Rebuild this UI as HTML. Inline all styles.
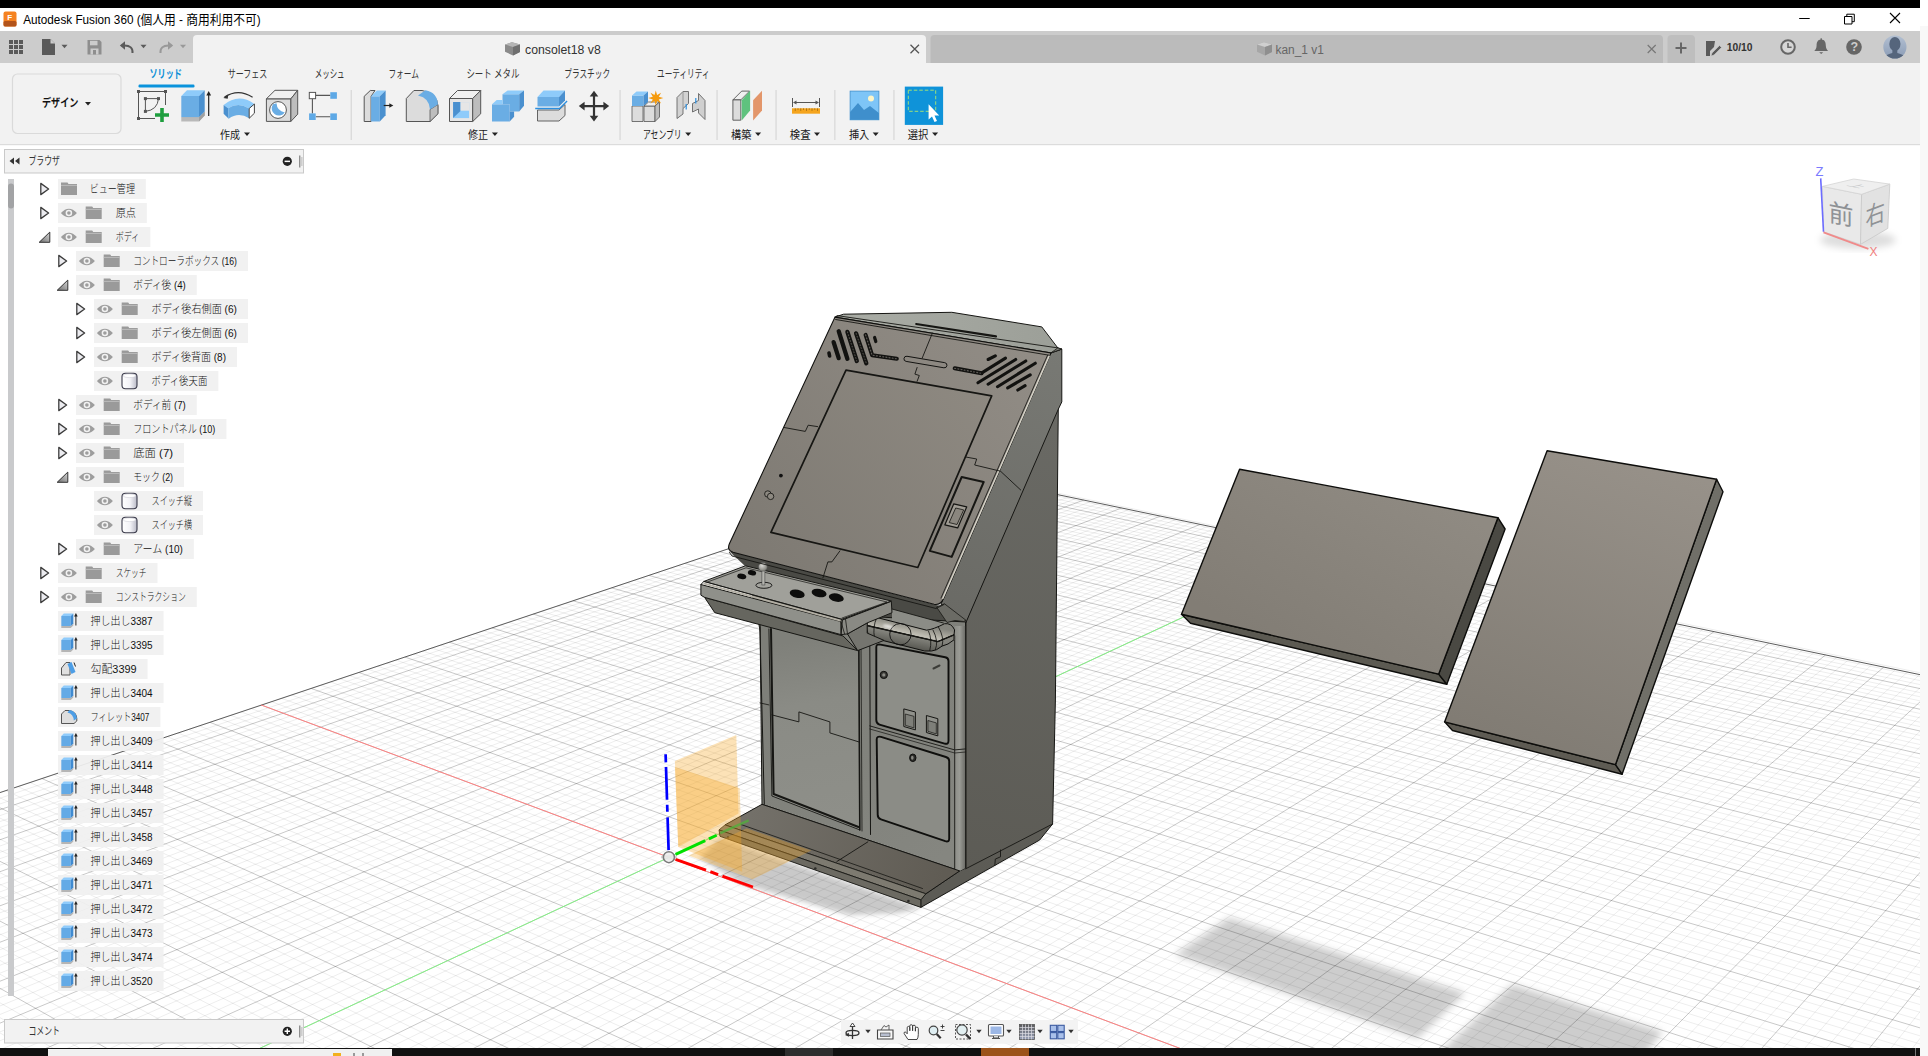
<!DOCTYPE html>
<html lang="ja"><head><meta charset="utf-8"><title>Autodesk Fusion 360</title>
<style>
html,body{margin:0;padding:0;background:#fff;overflow:hidden}
body{width:1928px;height:1056px;position:relative;font-family:"Liberation Sans","Noto Sans CJK JP",sans-serif}
svg{display:block}
</style></head><body>
<svg width="1920" height="903" viewBox="0 145 1920 903" style="position:absolute;left:0;top:145px">
<defs>
<filter id="b4" x="-20%" y="-20%" width="140%" height="140%"><feGaussianBlur stdDeviation="3.6"/></filter>
<filter id="b1" x="-50%" y="-50%" width="200%" height="200%"><feGaussianBlur stdDeviation="0.9"/></filter>
<filter id="b2" x="-20%" y="-20%" width="140%" height="140%"><feGaussianBlur stdDeviation="2.5"/></filter>
<linearGradient id="gBezel" gradientUnits="userSpaceOnUse" x1="1040" y1="340" x2="740" y2="600"><stop offset="0" stop-color="#928d86"/><stop offset="1" stop-color="#7c7871"/></linearGradient>
<linearGradient id="gScreen" gradientUnits="userSpaceOnUse" x1="990" y1="390" x2="780" y2="560"><stop offset="0" stop-color="#8e8981"/><stop offset="1" stop-color="#7f7b74"/></linearGradient>
<linearGradient id="gTop" gradientUnits="userSpaceOnUse" x1="840" y1="315" x2="1060" y2="345"><stop offset="0" stop-color="#a9aca5"/><stop offset="1" stop-color="#9c9f98"/></linearGradient>
<linearGradient id="gSide" gradientUnits="userSpaceOnUse" x1="1060" y1="400" x2="980" y2="880"><stop offset="0" stop-color="#6a6a65"/><stop offset="1" stop-color="#5c5b55"/></linearGradient>
<linearGradient id="gHouse" gradientUnits="userSpaceOnUse" x1="1060" y1="350" x2="960" y2="620"><stop offset="0" stop-color="#787974"/><stop offset="1" stop-color="#6a6a65"/></linearGradient>
<linearGradient id="gFront" gradientUnits="userSpaceOnUse" x1="780" y1="640" x2="940" y2="860"><stop offset="0" stop-color="#7d7e78"/><stop offset="1" stop-color="#858680"/></linearGradient>
<linearGradient id="gDoor" gradientUnits="userSpaceOnUse" x1="800" y1="640" x2="830" y2="820"><stop offset="0" stop-color="#7f807a"/><stop offset="0.35" stop-color="#8a8b85"/><stop offset="1" stop-color="#8e8f89"/></linearGradient>
<linearGradient id="gFoot" gradientUnits="userSpaceOnUse" x1="740" y1="815" x2="940" y2="885"><stop offset="0" stop-color="#74716a"/><stop offset="1" stop-color="#605c54"/></linearGradient>
<linearGradient id="gP1" gradientUnits="userSpaceOnUse" x1="1400" y1="480" x2="1300" y2="660"><stop offset="0" stop-color="#8f8a82"/><stop offset="1" stop-color="#827d75"/></linearGradient>
<linearGradient id="gP2" gradientUnits="userSpaceOnUse" x1="1640" y1="455" x2="1520" y2="760"><stop offset="0" stop-color="#979189"/><stop offset="1" stop-color="#807b73"/></linearGradient>
<linearGradient id="gTube" gradientUnits="userSpaceOnUse" x1="902" y1="622" x2="898.2" y2="645"><stop offset="0" stop-color="#5f5f59"/><stop offset="0.14" stop-color="#8a8a83"/><stop offset="0.27" stop-color="#dad8ce"/><stop offset="0.4" stop-color="#8f8f88"/><stop offset="0.72" stop-color="#66665f"/><stop offset="1" stop-color="#45453f"/></linearGradient>
<radialGradient id="gBall" cx="0.4" cy="0.35" r="0.7"><stop offset="0" stop-color="#d8d8d4"/><stop offset="1" stop-color="#77776f"/></radialGradient>
<clipPath id="cv"><rect x="0" y="145" width="1920" height="903"/></clipPath>
</defs>
<g clip-path="url(#cv)">
<g filter="url(#b4)" fill="#cdcdcd">
<polygon points="1228.8,918.0 1465.0,993.1 1417.8,1038.2 1175.2,954.5"/>
<polygon points="1512.3,984.5 1662.6,1031.8 1640.0,1060.0 1432.0,1060.0"/>
</g>
<g filter="url(#b2)" fill="#c9c9c9">
<polygon points="720.0,838.0 921.0,908.0 900.0,913.0 850.0,915.0 742.0,884.0 700.0,858.0"/>
</g>
<path d="M-3406.9 1932.9L954.5 473.1M-3417.5 1948.9L961.4 474.5M-3428.3 1965.1L968.3 476.0M-3450.4 1998.3L982.3 478.9M-3461.7 2015.3L989.3 480.4M-3473.2 2032.6L996.3 481.8M-3484.9 2050.2L1003.4 483.3M-3508.9 2086.2L1017.7 486.3M-3521.1 2104.6L1024.9 487.8M-3533.6 2123.3L1032.1 489.3M-3546.3 2142.4L1039.4 490.8M-3572.3 2181.5L1054.0 493.9M-3585.6 2201.5L1061.3 495.4M-3599.2 2221.9L1068.7 497.0M-3613.0 2242.7L1076.2 498.5M-3641.4 2285.3L1091.1 501.6M-3655.9 2307.2L1098.7 503.2M-3670.8 2329.5L1106.3 504.8M-3685.9 2352.2L1113.9 506.4M-3716.9 2398.8L1129.2 509.6M-3732.9 2422.8L1136.9 511.2M-3749.1 2447.2L1144.7 512.8M-3765.7 2472.2L1152.5 514.4M-3799.8 2523.4L1168.2 517.7M-3817.4 2549.8L1176.1 519.4M-3835.3 2576.8L1184.1 521.0M-3853.6 2604.2L1192.1 522.7M-3891.3 2660.9L1208.2 526.1M-3910.7 2690.1L1216.3 527.8M-3930.5 2719.9L1224.5 529.5M-3950.8 2750.3L1232.7 531.2M-3992.6 2813.2L1249.2 534.6M-4014.2 2845.7L1257.5 536.4M-4036.3 2878.9L1265.9 538.1M-4058.9 2912.8L1274.3 539.9M-4105.6 2983.0L1291.3 543.4M-4129.8 3019.4L1299.8 545.2M-4154.5 3056.5L1308.4 547.0M-4179.8 3094.6L1317.0 548.8M-4232.3 3173.5L1334.4 552.4M-4259.6 3214.4L1343.2 554.3M-4287.5 3256.3L1352.0 556.1M-4316.1 3299.3L1360.9 557.9M-4375.5 3388.7L1378.7 561.7M-4406.4 3435.1L1387.7 563.5M-4438.1 3482.7L1396.8 565.4M-4470.6 3531.7L1405.9 567.3M-4538.5 3633.6L1424.2 571.2M-4573.8 3686.7L1433.4 573.1M-4610.1 3741.3L1442.7 575.0M-4647.5 3797.6L1452.1 577.0M-4725.7 3915.0L1470.9 580.9M-4766.5 3976.4L1480.4 582.9M-4808.6 4039.6L1489.9 584.9M-4852.0 4104.9L1499.5 586.9M-4943.0 4241.6L1518.9 590.9M-4990.7 4313.4L1528.6 593.0M-5040.0 4387.5L1538.5 595.0M-5091.0 4464.1L1548.3 597.1M-5198.3 4625.4L1568.2 601.2M-5254.8 4710.3L1578.3 603.3M-5313.4 4798.3L1588.3 605.4M-5374.1 4889.6L1598.5 607.6M-5502.6 5082.6L1618.9 611.8M-5570.5 5184.8L1629.3 614.0M-5641.2 5291.0L1639.6 616.1M-5714.8 5401.6L1650.1 618.3M-5871.2 5636.7L1671.1 622.7M-5954.6 5762.0L1681.7 624.9M-6041.6 5892.7L1692.4 627.2M-6132.5 6029.4L1703.2 629.4M-6327.3 6322.2L1724.8 633.9M-6431.8 6479.2L1735.7 636.2M-6541.5 6644.1L1746.7 638.5M-6656.8 6817.4L1757.8 640.8M-6905.9 7191.9L1780.1 645.5M-7040.9 7394.6L1791.4 647.8M-7183.4 7608.9L1802.7 650.2M-7334.3 7835.7L1814.1 652.6M-7664.3 8331.6L1837.0 657.4M-7845.1 8603.4L1848.6 659.8M-8037.9 8893.2L1860.3 662.2M-8244.0 9202.9L1872.0 664.7M-8701.4 9890.4L1895.7 669.6M-8956.4 10273.6L1907.6 672.1M-9231.5 10687.2L1919.7 674.6M-9529.5 11134.9L1931.8 677.1M-10205.8 12151.4L1956.2 682.2M-10591.8 12731.6L1968.5 684.8M-11016.0 13369.2L1980.9 687.4M-11484.4 14073.2L1993.4 690.0M-12584.7 15726.8L2018.6 695.3M-13236.7 16706.8L2031.3 697.9M-13974.5 17815.6L2044.1 700.6M-14816.2 19080.7L2056.9 703.3M-16913.5 22232.9L2082.9 708.7M-18243.0 24231.2L2096.0 711.4M-19833.3 26621.2L2109.2 714.2M-21769.2 29530.8L2122.5 717.0M-27254.2 37774.7L2149.4 722.6M-31323.7 43890.9L2162.9 725.4M-22097.5 32753.4L2176.5 728.2M-24848.3 37261.7L2190.3 731.1M-20066.0 32365.9L2218.0 736.9M-22505.8 36762.4L2232.0 739.8M-25708.6 42533.6L2246.1 742.8M-30098.6 50444.2L2260.3 745.7M-23027.7 41885.6L2288.9 751.7M-26851.7 49537.6L2303.4 754.7M-18001.7 35802.1L2318.0 757.8M-20426.3 41256.7L2332.6 760.8M-15835.5 35340.3L2362.3 767.0M-17900.7 40646.2L2377.2 770.1M-20692.1 47817.7L2392.3 773.3M-13723.5 34890.0L2407.5 776.5M-17768.2 47001.3L2438.1 782.9M-11663.9 34450.9L2453.6 786.1M-13064.5 39477.2L2469.2 789.3M-14941.3 46212.0L2484.9 792.6M-10747.9 38917.2L2516.7 799.3M-12206.7 45448.5L2532.7 802.6M-7693.9 33604.6L2548.9 806.0M-8495.1 38372.7L2565.2 809.4M-5780.0 33196.5L2598.1 816.2M-6303.6 37842.9L2614.7 819.7M-6996.8 43993.8L2631.4 823.2M-3911.3 32798.2L2648.3 826.7M-4513.5 43300.4L2682.4 833.9M-2086.1 32409.0L2699.6 837.5M-2094.8 36825.5L2717.0 841.1M-2106.2 42628.3L2734.5 844.7M-72.9 36336.8L2769.9 852.1M228.4 41976.4L2787.7 855.9M639.9 49678.3L2805.8 859.6M1896.8 35860.6L2823.9 863.4M-895.0 1092.1L37997.0 43897.9M-874.0 1085.1L32121.5 36532.4M-853.2 1078.1L40102.8 44049.4M-832.6 1071.2L33856.9 36636.6M-792.1 1057.7L35602.6 36741.5M-772.1 1051.0L44359.9 44355.6M-752.4 1044.4L37358.7 36847.0M-732.9 1037.9L46511.4 44510.4M-694.6 1025.1L48678.4 44666.3M-675.7 1018.7L40902.5 37059.9M-657.0 1012.5L50861.2 44823.3M-638.6 1006.3L42690.4 37167.3M-602.2 994.1L44489.0 37275.4M-584.3 988.1L55274.6 45140.8M-566.6 982.2L46298.6 37384.1M-549.0 976.3L57505.5 45301.3M-514.5 964.8L59752.9 45462.9M-497.5 959.1L49950.8 37603.5M-480.7 953.5L62016.9 45625.8M-464.0 947.9L51793.7 37714.2M-431.1 936.9L53647.8 37825.6M-415.0 931.5L66595.3 45955.2M-399.0 926.1L55513.3 37937.7M-383.1 920.8L68910.2 46121.7M-351.8 910.3L49291.7 32376.2M-336.4 905.2L43287.2 28169.3M-321.2 900.1L38657.7 24925.7M-306.0 895.0L34979.3 22348.5M-276.2 885.0L29503.4 18511.8M-261.6 880.1L27410.4 17045.5M-247.0 875.2L25622.3 15792.6M-232.6 870.4L24076.8 14709.8M-204.1 860.9L21540.0 12932.4M-190.1 856.2L20486.2 12194.1M-176.2 851.6L19544.9 11534.6M-162.5 847.0L18698.9 10941.9M-135.3 837.9L17240.6 9920.1M-121.9 833.4L16607.7 9476.7M-108.6 828.9L16028.1 9070.6M-95.5 824.5L15495.3 8697.3M-69.5 815.8L14549.4 8034.6M-56.7 811.5L14127.6 7739.0M-44.0 807.3L13735.2 7464.1M-31.4 803.1L13369.1 7207.6M-6.5 794.8L12706.3 6743.2M5.8 790.6L12405.2 6532.3M17.9 786.6L12122.0 6333.8M30.0 782.5L11855.1 6146.8M53.8 774.6L11364.8 5803.3M65.6 770.6L11139.2 5645.3M77.2 766.7L10925.2 5495.3M88.8 762.9L10722.0 5353.0M111.6 755.2L10344.8 5088.7M122.9 751.4L10169.5 4965.8M134.1 747.7L10002.2 4848.6M145.2 744.0L9842.3 4736.6M167.1 736.6L9543.1 4527.0M177.9 733.0L9402.9 4428.8M188.7 729.4L9268.5 4334.6M199.3 725.9L9139.4 4244.2M220.4 718.8L8896.3 4073.8M230.8 715.3L8781.7 3993.5M241.1 711.9L8671.3 3916.2M251.3 708.5L8565.0 3841.7M271.6 701.7L8363.6 3700.6M281.6 698.3L8268.1 3633.7M291.5 695.0L8175.9 3569.0M301.4 691.7L8086.7 3506.6M320.8 685.2L7917.1 3387.7M330.5 682.0L7836.3 3331.2M340.0 678.8L7758.1 3276.4M349.5 675.6L7682.3 3223.2M368.2 669.3L7537.5 3121.8M377.5 666.2L7468.3 3073.3M386.7 663.1L7401.2 3026.3M395.8 660.1L7335.9 2980.5M413.9 654.0L7210.9 2892.9M422.8 651.1L7150.9 2850.9M431.7 648.1L7092.6 2810.1M440.5 645.1L7035.9 2770.3M457.9 639.3L6926.8 2693.9M466.5 636.4L6874.4 2657.2M475.1 633.6L6823.3 2621.4M483.6 630.7L6773.4 2586.5M500.4 625.1L6677.5 2519.2M508.7 622.3L6631.2 2486.8M516.9 619.6L6586.1 2455.2M525.1 616.8L6542.0 2424.3M541.3 611.4L6456.9 2364.7M549.3 608.7L6415.8 2335.9M557.3 606.0L6375.6 2307.7M565.2 603.4L6336.3 2280.2M580.9 598.2L6260.4 2227.0M588.6 595.6L6223.6 2201.2M596.3 593.0L6187.6 2176.0M604.0 590.4L6152.4 2151.3M619.1 585.4L6084.1 2103.5M626.6 582.8L6051.1 2080.3M634.1 580.4L6018.6 2057.6M641.4 577.9L5986.9 2035.4M656.1 573.0L5925.2 1992.2M663.3 570.6L5895.3 1971.2M670.5 568.1L5866.0 1950.6M677.7 565.8L5837.2 1930.5M691.8 561.0L5781.2 1891.3M698.9 558.7L5754.0 1872.2M705.8 556.3L5727.3 1853.5M712.8 554.0L5701.1 1835.1M726.5 549.4L5650.1 1799.4M733.3 547.2L5625.3 1782.0M740.0 544.9L5600.9 1764.9M746.7 542.6L5576.9 1748.1M760.0 538.2L5530.2 1715.4M766.6 536.0L5507.5 1699.5M773.1 533.8L5485.1 1683.8M779.6 531.6L5463.1 1668.4M792.5 527.3L5420.2 1638.3M798.8 525.2L5399.2 1623.6M805.2 523.1L5378.7 1609.2M811.5 521.0L5358.4 1595.0M824.0 516.8L5318.8 1567.3M830.1 514.7L5299.5 1553.8M836.3 512.7L5280.5 1540.4M842.4 510.6L5261.8 1527.3M854.5 506.6L5225.2 1501.7M860.5 504.6L5207.3 1489.1M866.5 502.6L5189.7 1476.8M872.4 500.6L5172.3 1464.6M884.1 496.7L5138.3 1440.8M889.9 494.7L5121.7 1429.2M895.7 492.8L5105.4 1417.7M901.5 490.8L5089.2 1406.4M912.9 487.0L5057.7 1384.3M918.5 485.1L5042.2 1373.5M924.2 483.3L5027.0 1362.8M929.8 481.4L5011.9 1352.3M940.8 477.7L4982.5 1331.6M946.3 475.8L4968.0 1321.5M951.8 474.0L4953.8 1311.5M957.2 472.2L4939.8 1301.7" stroke="#000" stroke-opacity="0.07" stroke-width="1" fill="none"/>
<path d="M-3439.3 1981.6L975.3 477.4M-3496.8 2068.0L1010.5 484.8M-3559.2 2161.8L1046.7 492.3M-3627.1 2263.8L1083.6 500.1M-3701.2 2375.3L1121.5 508.0M-3782.6 2497.5L1160.3 516.1M-3872.2 2632.3L1200.1 524.4M-3971.5 2781.4L1240.9 532.9M-4082.0 2947.5L1282.8 541.6M-4205.8 3133.6L1325.7 550.6M-4345.4 3343.4L1369.8 559.8M-4504.1 3581.9L1415.0 569.2M-4686.0 3855.4L1461.5 578.9M-4896.8 4172.2L1509.2 588.9M-5143.8 4543.3L1558.2 599.2M-5437.1 4984.3L1608.7 609.7M-5791.4 5516.7L1660.6 620.5M-6227.6 6172.4L1714.0 631.7M-6778.1 6999.7L1768.9 643.1M-7494.4 8076.2L1825.5 655.0M-8464.6 9534.5L1883.8 667.1M-9853.0 11621.2L1943.9 679.7M-12004.3 14854.6L2005.9 692.6M-15785.4 20537.4L2069.9 706.0M-24177.3 33150.1L2135.9 719.8M-28472.6 43201.8L2204.1 734.0M-20224.4 36276.0L2274.5 748.7M-23718.1 48662.6L2347.4 763.9M-15447.8 40053.3L2422.7 779.6M-9654.6 34022.6L2500.8 795.9M-9559.9 44709.5L2581.5 812.8M-4171.0 37327.4L2665.3 830.3M-303.0 32028.9L2752.1 848.4M-916.3 1099.3L30396.4 36428.7M-812.2 1064.4L42223.7 44202.0M-713.7 1031.4L39125.3 36953.1M-620.3 1000.2L53059.9 44981.5M-531.7 970.5L48119.2 37493.5M-447.5 942.4L64297.6 45789.9M-367.4 915.5L57390.3 38050.4M-291.1 890.0L31986.3 20251.5M-218.3 865.6L22727.8 13764.6M-148.8 842.4L17934.6 10406.4M-82.4 820.2L15004.0 8353.1M-18.9 798.9L13026.9 6967.9M41.9 778.5L11603.1 5970.3M100.2 759.0L10528.8 5217.6M156.2 740.3L9689.4 4629.5M209.9 722.3L9015.5 4157.3M261.5 705.1L8462.5 3769.8M311.1 688.4L8000.5 3446.2M358.9 672.5L7608.8 3171.8M404.9 657.1L7272.5 2936.1M449.2 642.2L6980.6 2731.6M492.0 627.9L6724.9 2552.4M533.2 614.1L6498.9 2394.1M573.1 600.8L6297.9 2253.3M611.6 587.9L6117.9 2127.2M648.8 575.4L5955.8 2013.6M684.8 563.4L5808.9 1910.7M719.6 551.7L5675.4 1817.1M753.4 540.4L5553.4 1731.6M786.1 529.5L5441.5 1653.2M817.7 518.9L5338.4 1581.0M848.5 508.6L5243.3 1514.4M878.3 498.6L5155.2 1452.7M907.2 488.9L5073.3 1395.3M935.3 479.5L4997.1 1341.9" stroke="#000" stroke-opacity="0.215" stroke-width="1" fill="none"/>
<polyline points="-3406.9,1932.9 954.5,473.1 2500.8,795.9" fill="none" stroke="#5c5c5c" stroke-width="1" stroke-linejoin="round" stroke-linecap="round" />
<polyline points="261.5,705.1 2260.7,1452.2" fill="none" stroke="#ff8080" stroke-width="1" stroke-linejoin="round" stroke-linecap="round" />
<polyline points="-164.3,1246.4 1325.7,550.6" fill="none" stroke="#84f284" stroke-width="1" stroke-linejoin="round" stroke-linecap="round" />
<polygon points="1181.5,614.3 1438.7,674.1 1446.8,684.3 1190.5,623.3" fill="#5c5a52" stroke="#0d0d0b" stroke-width="1.4" stroke-linejoin="round" />
<polygon points="1497.9,517.7 1505.1,529.0 1446.8,684.3 1438.7,674.1" fill="#4a4943" stroke="#0d0d0b" stroke-width="1.4" stroke-linejoin="round" />
<polygon points="1239.6,469.2 1497.9,517.7 1438.7,674.1 1181.5,614.3" fill="url(#gP1)" stroke="#0d0d0b" stroke-width="1.4" stroke-linejoin="round" />
<polygon points="1444.6,721.9 1615.5,764.6 1622.1,774.2 1452.5,730.5" fill="#5e5b53" stroke="#0d0d0b" stroke-width="1.4" stroke-linejoin="round" />
<polygon points="1716.6,479.3 1723.0,491.8 1622.1,774.2 1615.5,764.6" fill="#706f68" stroke="#0d0d0b" stroke-width="1.4" stroke-linejoin="round" />
<polygon points="1547.1,450.7 1716.6,479.3 1615.5,764.6 1444.6,721.9" fill="url(#gP2)" stroke="#0d0d0b" stroke-width="1.4" stroke-linejoin="round" />
<polygon points="1058.3,406.0 1055.4,700.0 1052.6,824.0 1039.7,840.0 920.8,907.4 920.8,899.8 925.8,893.8 959.7,870.9 965.7,868.0 965.7,622.0" fill="url(#gSide)" stroke="#161613" stroke-width="1" stroke-linejoin="round" />
<polyline points="1052.6,824.0 965.7,868.8" fill="none" stroke="#161613" stroke-width="0.9" stroke-linejoin="round" stroke-linecap="round" />
<polyline points="1000.5,850.0 1000.5,856.8 995.3,859.1 994.8,865.5" fill="none" stroke="#161613" stroke-width="0.9" stroke-linejoin="round" stroke-linecap="round" />
<polygon points="1050.9,352.9 1061.8,349.1 1061.8,401.9 1058.3,409.2 965.5,623.5 941.0,604.0" fill="url(#gHouse)" stroke="#161613" stroke-width="1" stroke-linejoin="round" />
<polyline points="1000.2,470.9 1020.7,490.0" fill="none" stroke="#161613" stroke-width="0.9" stroke-linejoin="round" stroke-linecap="round" />
<polygon points="834.9,317.1 843.6,314.2 951.8,312.3 1041.8,326.9 1057.8,347.9 1061.8,349.1 1050.9,352.9" fill="url(#gTop)" stroke="#161613" stroke-width="1" stroke-linejoin="round" />
<polyline points="837.0,315.6 1057.8,347.9" fill="none" stroke="#161613" stroke-width="0.9" stroke-linejoin="round" stroke-linecap="round" />
<polyline points="916.2,324.0 996.0,336.3" fill="none" stroke="#161613" stroke-width="2.2" stroke-linejoin="round" stroke-linecap="round" />
<polygon points="1057.8,347.9 1061.8,349.1 1050.9,352.9" fill="#7d7e79" stroke="#161613" stroke-width="0.8" stroke-linejoin="round" />
<polygon points="729.0,551.0 940.0,606.0 966.0,624.0 966.0,662.0 862.0,662.0 760.0,632.0 745.0,566.0" fill="#4a4a45" stroke="none" stroke-width="1" stroke-linejoin="round" />
<polygon points="759.9,610.0 965.7,622.0 965.7,868.0 959.7,870.9 762.0,804.3" fill="url(#gFront)" stroke="#161613" stroke-width="1" stroke-linejoin="round" />
<linearGradient id="gCorner" gradientUnits="userSpaceOnUse" x1="954.7" y1="0" x2="965.7" y2="0"><stop offset="0" stop-color="#8c8d87"/><stop offset="0.45" stop-color="#9a9b95"/><stop offset="1" stop-color="#696964"/></linearGradient>
<polygon points="954.7,626.0 965.7,626.0 965.7,868.0 959.7,870.9 954.7,869.2" fill="url(#gCorner)" stroke="none" stroke-width="1" stroke-linejoin="round" />
<polyline points="954.7,636.0 954.7,869.2" fill="none" stroke="#161613" stroke-width="0.9" stroke-linejoin="round" stroke-linecap="round" />
<polyline points="965.7,622.0 965.7,868.0" fill="none" stroke="#161613" stroke-width="1" stroke-linejoin="round" stroke-linecap="round" />
<polygon points="771.0,629.0 858.8,640.0 859.8,829.9 771.9,796.0" fill="url(#gDoor)" stroke="none" stroke-width="1" stroke-linejoin="round" />
<polyline points="768.9,629.0 771.9,796.0 859.8,829.9" fill="none" stroke="#161613" stroke-width="0.9" stroke-linejoin="round" stroke-linecap="round" />
<polyline points="771.0,629.0 773.6,794.0 858.5,827.0" fill="none" stroke="#161613" stroke-width="2" stroke-linejoin="round" stroke-linecap="round" />
<polyline points="858.8,640.0 859.8,829.9" fill="none" stroke="#161613" stroke-width="1.6" stroke-linejoin="round" stroke-linecap="round" />
<polyline points="861.0,640.0 862.0,831.0" fill="none" stroke="#161613" stroke-width="0.8" stroke-linejoin="round" stroke-linecap="round" />
<polyline points="869.8,640.0 870.5,834.5" fill="none" stroke="#161613" stroke-width="1" stroke-linejoin="round" stroke-linecap="round" />
<polyline points="771.9,714.9 798.9,721.9 798.9,711.9 829.9,721.9 829.9,732.9 858.8,741.9" fill="none" stroke="#161613" stroke-width="0.9" stroke-linejoin="round" stroke-linecap="round" />
<polyline points="759.9,702.9 768.9,704.9" fill="none" stroke="#161613" stroke-width="0.8" stroke-linejoin="round" stroke-linecap="round" />
<path d="M876.3 647 L876.3 720 Q876.3 723.6 879.5 724.6 L944.6 743.6 Q948.5 744.6 948.5 740.8 L948.5 661 Q948.5 658 945.2 657.3 L880.5 644.6 Q876.3 643.8 876.3 647Z" fill="#8d8e88" stroke="#0f0f0d" stroke-width="1.9" stroke-linejoin="round"/>
<path d="M876.7 739.5 L877.7 814.8 Q877.7 818.3 881 819.4 L945.3 841.2 Q949.2 842.4 949.2 838.6 L949.2 761 Q949.2 758 945.9 757 L881 736.9 Q876.7 735.800 876.7 739.500Z" fill="#8b8c86" stroke="#0f0f0d" stroke-width="1.9" stroke-linejoin="round"/>
<polyline points="869.8,725.9 954.7,749.9 965.7,748.9" fill="none" stroke="#161613" stroke-width="0.9" stroke-linejoin="round" stroke-linecap="round" />
<polyline points="869.8,729.0 954.7,753.0 965.7,752.0" fill="none" stroke="#161613" stroke-width="0.7" stroke-linejoin="round" stroke-linecap="round" />
<circle cx="883.8" cy="674.9" r="3.6" fill="#3a3a36" stroke="#0f0f0d" stroke-width="1"/>
<circle cx="883.8" cy="674.9" r="1.6" fill="#8a8a84"/>
<polyline points="933.5,668.5 939.5,665.5" fill="none" stroke="#3c3c38" stroke-width="2" stroke-linejoin="round" stroke-linecap="round" />
<polygon points="903.8,708.9 915.4,712.0 915.4,729.9 903.8,726.5" fill="#90918b" stroke="#161613" stroke-width="1" stroke-linejoin="round" />
<polygon points="905.3,714.0 913.9,716.3 913.9,727.9 905.3,725.3" fill="#7e7f79" stroke="#161613" stroke-width="0.7" stroke-linejoin="round" />
<polygon points="926.4,715.5 937.8,718.7 937.8,735.9 926.4,732.5" fill="#90918b" stroke="#161613" stroke-width="1" stroke-linejoin="round" />
<polygon points="927.9,720.5 936.3,722.9 936.3,733.9 927.9,731.3" fill="#7e7f79" stroke="#161613" stroke-width="0.7" stroke-linejoin="round" />
<ellipse cx="912.8" cy="757.8" rx="3.2" ry="3.8" fill="#2a2a27" stroke="#0f0f0d" stroke-width="1"/>
<ellipse cx="912.3" cy="757.8" rx="1.3" ry="2" fill="#8a8a84"/>
<polyline points="759.9,627.0 764.3,804.0" fill="none" stroke="#161613" stroke-width="1" stroke-linejoin="round" stroke-linecap="round" />
<polygon points="725.0,824.9 762.0,804.3 959.7,870.9 925.8,893.8" fill="url(#gFoot)" stroke="#161613" stroke-width="1" stroke-linejoin="round" />
<polygon points="719.0,829.9 920.8,899.8 925.8,893.8 725.0,824.9" fill="#7d7a70" stroke="#161613" stroke-width="0.8" stroke-linejoin="round" />
<polygon points="719.0,829.9 920.8,899.8 920.8,907.4 720.0,836.3" fill="#6c6a62" stroke="#161613" stroke-width="0.9" stroke-linejoin="round" />
<polyline points="741.0,824.5 922.5,888.5" fill="none" stroke="#161613" stroke-width="0.8" stroke-linejoin="round" stroke-linecap="round" />
<polyline points="867.8,841.9 836.9,861.5" fill="none" stroke="#161613" stroke-width="0.9" stroke-linejoin="round" stroke-linecap="round" />
<circle cx="728.0" cy="837.5" r="1.3" fill="#2a2a27"/>
<circle cx="815.3" cy="868.5" r="1.3" fill="#2a2a27"/>
<circle cx="908.4" cy="901.0" r="1.3" fill="#2a2a27"/>
<polygon points="892.0,609.0 943.4,623.0 954.6,627.0 954.6,640.0 892.0,622.0" fill="#8b8c86" stroke="none" stroke-width="1" stroke-linejoin="round" />
<polyline points="892.0,609.0 943.4,623.0" fill="none" stroke="#161613" stroke-width="0.9" stroke-linejoin="round" stroke-linecap="round" />
<polygon points="936.5,607.0 944.5,603.8 966.0,620.3 963.5,621.5 955.0,620.5 947.0,622.5" fill="#6b6b65" stroke="#161613" stroke-width="0.8" stroke-linejoin="round" />
<linearGradient id="gTubeU" gradientUnits="userSpaceOnUse" x1="902" y1="621" x2="899.5" y2="634"><stop offset="0" stop-color="#84847d"/><stop offset="0.5" stop-color="#a9a79d"/><stop offset="0.85" stop-color="#c2c0b6"/><stop offset="1" stop-color="#9d9c94"/></linearGradient>
<linearGradient id="gTubeL" gradientUnits="userSpaceOnUse" x1="899.5" y1="634" x2="897" y2="647"><stop offset="0" stop-color="#83837c"/><stop offset="1" stop-color="#52524c"/></linearGradient>
<path d="M866.8 625.5 Q867.5 618 873.7 616.7 L926.6 630.2 Q933 629.5 944.6 623.7 Q951.5 622.8 954.6 629.9 L954 634.9 L937.8 641.7 Z" fill="url(#gTubeU)" stroke="#0f0f0d" stroke-width="1"/>
<path d="M866.8 625.5 L937.8 641.7 L954 634.9 L954 639.8 Q948 645 942.1 646.1 Q936 651 931.5 651 L924.7 651 L870.6 637.4 Q866.5 633 866.8 625.5 Z" fill="url(#gTubeL)" stroke="#0f0f0d" stroke-width="1"/>
<polyline points="866.8,625.5 937.8,641.7 954.0,634.9" fill="none" stroke="#161613" stroke-width="1.3" stroke-linejoin="round" stroke-linecap="round" />
<path d="M876.8 617.6 Q872.5 627 874.5 638" fill="none" stroke="#0f0f0d" stroke-width="0.8"/>
<circle cx="900.4" cy="634.2" r="10.7" fill="none" stroke="#0f0f0d" stroke-width="0.9"/>
<path d="M928.4 630.8 Q932.5 640 929.7 650.8" fill="none" stroke="#0f0f0d" stroke-width="0.8"/>
<path d="M932.8 629.6 Q938.8 641 935.3 650" fill="none" stroke="#0f0f0d" stroke-width="0.8"/>
<path d="M938.4 627 Q944.4 637.4 942.1 646" fill="none" stroke="#0f0f0d" stroke-width="0.8"/>
<ellipse cx="888" cy="626.3" rx="5" ry="1.6" fill="#fff" fill-opacity="0.7" transform="rotate(13 888 626.3)" filter="url(#b1)"/>
<polygon points="704.6,597.4 843.1,636.0 857.7,650.6 714.8,612.7" fill="#66665f" stroke="#161613" stroke-width="1" stroke-linejoin="round" />
<polygon points="847.5,633.9 857.7,650.6 884.0,640.4 867.2,633.1 867.2,622.9" fill="#75756f" stroke="#161613" stroke-width="1" stroke-linejoin="round" />
<polygon points="842.4,620.0 891.3,601.3 892.0,612.7 867.2,622.9 847.5,633.9 841.0,634.6" fill="#8a8a84" stroke="#161613" stroke-width="1" stroke-linejoin="round" />
<polygon points="700.9,584.5 840.9,621.5 840.9,634.6 704.6,597.4 700.9,595.2" fill="#8f908a" stroke="#161613" stroke-width="1" stroke-linejoin="round" />
<polygon points="703.9,581.4 745.4,565.8 891.3,601.0 841.7,619.3" fill="#a0a09a" stroke="#161613" stroke-width="1" stroke-linejoin="round" />
<polyline points="707.5,582.0 746.0,567.8 887.0,602.0 842.0,618.0" fill="none" stroke="#161613" stroke-width="0.7" stroke-linejoin="round" stroke-linecap="round" />
<polyline points="704.5,583.6 840.5,620.6" fill="none" stroke="#b3afa4" stroke-width="2" stroke-linejoin="round" stroke-linecap="round" />
<polyline points="703.9,581.4 841.7,619.3" fill="none" stroke="#161613" stroke-width="0.7" stroke-linejoin="round" stroke-linecap="round" />
<polyline points="700.9,584.5 703.9,581.4" fill="none" stroke="#161613" stroke-width="1" stroke-linejoin="round" stroke-linecap="round" />
<polyline points="841.7,619.3 840.9,621.5 844.5,633.5" fill="none" stroke="#161613" stroke-width="0.8" stroke-linejoin="round" stroke-linecap="round" />
<polyline points="845.5,619.0 847.5,633.9" fill="none" stroke="#161613" stroke-width="0.8" stroke-linejoin="round" stroke-linecap="round" />
<ellipse cx="741.8" cy="576.4" rx="4.6" ry="2.7" fill="#0d0d0c" transform="rotate(12 741.8 576.4)"/>
<ellipse cx="752.0" cy="572.8" rx="4.2" ry="2.6" fill="#0d0d0c" transform="rotate(12 752.0 572.8)"/>
<ellipse cx="797.2" cy="593.8" rx="7.6" ry="4.1" fill="#0d0d0c" transform="rotate(12 797.2 593.8)"/>
<ellipse cx="819.1" cy="593.0" rx="7.6" ry="4.1" fill="#0d0d0c" transform="rotate(12 819.1 593.0)"/>
<ellipse cx="836.3" cy="597.6" rx="7.6" ry="4.1" fill="#0d0d0c" transform="rotate(12 836.3 597.6)"/>
<ellipse cx="763.9" cy="585.3" rx="8" ry="3" fill="#a4a49e" stroke="#0f0f0d" stroke-width="0.9"/>
<rect x="761.9" y="569" width="3" height="16" fill="#b4b4ae" stroke="#444" stroke-width="0.6"/>
<circle cx="762.9" cy="566.8" r="4.4" fill="url(#gBall)" stroke="#555" stroke-width="0.6"/>
<path d="M835 317.1 L1050.9 352.9 L943.5 598.5 Q940.5 605.5 934 604.3 L733 552.2 Q726.5 550 729.5 543.5 Z" fill="url(#gBezel)" stroke="#0f0f0d" stroke-width="1.1"/>
<polyline points="729.5,552.5 732.0,556.0 936.0,608.5 944.0,604.5" fill="none" stroke="#161613" stroke-width="0.9" stroke-linejoin="round" stroke-linecap="round" />
<polyline points="1049.4,355.4 942.8,598.5" fill="none" stroke="#d6d3c8" stroke-width="1.5" stroke-linejoin="round" stroke-linecap="round" />
<polyline points="1047.6,355.2 941.0,598.0" fill="none" stroke="#0f0f0d" stroke-width="0.8" stroke-linejoin="round" stroke-linecap="round" />
<polyline points="835.6,319.5 1049.6,355.3" fill="none" stroke="#161613" stroke-width="0.9" stroke-linejoin="round" stroke-linecap="round" />
<polygon points="846.0,370.1 991.7,395.8 917.8,567.5 770.9,532.3" fill="url(#gScreen)" stroke="#161613" stroke-width="1.7" stroke-linejoin="round" />
<polyline points="932.4,333.1 922.2,358.1" fill="none" stroke="#161613" stroke-width="0.9" stroke-linejoin="round" stroke-linecap="round" />
<polyline points="917.1,367.5 914.9,374.1 919.3,375.5 917.1,381.3" fill="none" stroke="#161613" stroke-width="0.9" stroke-linejoin="round" stroke-linecap="round" />
<polyline points="784.2,427.5 805.3,431.4 808.2,425.2 817.6,426.6" fill="none" stroke="#161613" stroke-width="0.9" stroke-linejoin="round" stroke-linecap="round" />
<polyline points="839.9,550.9 831.9,561.9 827.9,561.9 822.9,577.9" fill="none" stroke="#161613" stroke-width="0.9" stroke-linejoin="round" stroke-linecap="round" />
<polyline points="965.7,457.0 976.7,459.0 974.7,465.0 999.7,471.0" fill="none" stroke="#161613" stroke-width="0.9" stroke-linejoin="round" stroke-linecap="round" />
<rect x="0" y="-2.6" width="43.5" height="5.2" rx="2.6" fill="none" stroke="#0f0f0d" stroke-width="0.9" transform="translate(904 358.4) rotate(9.6)"/>
<polyline points="833.6,342.1 838.7,358.1" fill="none" stroke="#121210" stroke-width="4.3" stroke-linejoin="round" stroke-linecap="round" />
<polyline points="838.7,331.2 847.4,358.8" fill="none" stroke="#121210" stroke-width="4.3" stroke-linejoin="round" stroke-linecap="round" />
<polyline points="847.4,331.9 856.8,361.0" fill="none" stroke="#121210" stroke-width="4.3" stroke-linejoin="round" stroke-linecap="round" />
<polyline points="856.1,333.4 866.3,363.2" fill="none" stroke="#121210" stroke-width="4.3" stroke-linejoin="round" stroke-linecap="round" />
<polyline points="865.6,334.9 872.1,355.2 896.8,358.8" fill="none" stroke="#121210" stroke-width="4.1" stroke-linejoin="round" stroke-linecap="round" />
<polyline points="829.0,353.0 829.6,356.0" fill="none" stroke="#121210" stroke-width="3.6" stroke-linejoin="round" stroke-linecap="round" />
<polyline points="874.6,337.5 875.8,341.5" fill="none" stroke="#121210" stroke-width="3.2" stroke-linejoin="round" stroke-linecap="round" />
<polyline points="847.4,331.9 856.8,361.0" fill="none" stroke="#8f8b83" stroke-width="1.1" stroke-linejoin="round" stroke-linecap="round" stroke-dasharray="0.9 2.1" stroke-opacity="0.5"/>
<polyline points="856.1,333.4 866.3,363.2" fill="none" stroke="#8f8b83" stroke-width="1.1" stroke-linejoin="round" stroke-linecap="round" stroke-dasharray="0.9 2.1" stroke-opacity="0.5"/>
<polyline points="865.6,334.9 872.1,355.2 896.8,358.8" fill="none" stroke="#8f8b83" stroke-width="1.2" stroke-linejoin="round" stroke-linecap="round" stroke-dasharray="1 2.2" stroke-opacity="0.6"/>
<polyline points="954.7,368.3 981.5,373.3" fill="none" stroke="#121210" stroke-width="4.1" stroke-linejoin="round" stroke-linecap="round" />
<polyline points="954.7,368.3 981.5,373.3" fill="none" stroke="#8f8b83" stroke-width="1.2" stroke-linejoin="round" stroke-linecap="round" stroke-dasharray="1 2.2" stroke-opacity="0.6"/>
<polyline points="988.1,359.5 995.3,355.9" fill="none" stroke="#121210" stroke-width="3.1" stroke-linejoin="round" stroke-linecap="round" />
<polyline points="982.2,372.6 1005.5,358.1" fill="none" stroke="#121210" stroke-width="3.1" stroke-linejoin="round" stroke-linecap="round" />
<polyline points="977.9,382.8 1015.7,359.5" fill="none" stroke="#121210" stroke-width="3.1" stroke-linejoin="round" stroke-linecap="round" />
<polyline points="988.1,384.2 1025.8,361.0" fill="none" stroke="#121210" stroke-width="3.1" stroke-linejoin="round" stroke-linecap="round" />
<polyline points="997.5,386.7 1035.3,363.2" fill="none" stroke="#121210" stroke-width="3.1" stroke-linejoin="round" stroke-linecap="round" />
<polyline points="1007.7,387.9 1030.2,374.8" fill="none" stroke="#121210" stroke-width="3.1" stroke-linejoin="round" stroke-linecap="round" />
<polyline points="1017.8,390.0 1025.1,385.7" fill="none" stroke="#121210" stroke-width="3.1" stroke-linejoin="round" stroke-linecap="round" />
<polygon points="961.7,477.0 983.7,482.0 951.7,556.9 929.8,550.9" fill="none" stroke="#161613" stroke-width="2" stroke-linejoin="round" />
<polygon points="953.7,503.9 966.7,506.9 957.7,527.9 944.8,524.9" fill="#a09c94" stroke="#161613" stroke-width="1.2" stroke-linejoin="round" />
<polygon points="955.7,508.0 963.7,509.9 957.0,524.5 949.2,522.6" fill="#8a867e" stroke="#161613" stroke-width="0.8" stroke-linejoin="round" />
<circle cx="780.9" cy="475.6" r="1.9" fill="#111"/>
<circle cx="767.8" cy="494" r="3.2" fill="#8d8981" stroke="#0f0f0d" stroke-width="0.8"/>
<circle cx="770.6" cy="496.4" r="3.2" fill="#8d8981" stroke="#0f0f0d" stroke-width="0.8"/>
<polygon points="674.9,760.9 736.3,735.0 738.5,813.4 678.3,847.0" fill="#f5a623" stroke="none" stroke-width="1" stroke-linejoin="round" fill-opacity="0.33"/>
<polygon points="674.9,766.9 739.7,788.2 742.2,871.7 678.3,847.0" fill="#f5a623" stroke="none" stroke-width="1" stroke-linejoin="round" fill-opacity="0.33"/>
<polygon points="688.6,855.5 746.5,828.2 811.3,850.4 752.5,879.3" fill="#f5a623" stroke="none" stroke-width="1" stroke-linejoin="round" fill-opacity="0.33"/>
<line x1="668.6" y1="850.1" x2="665.6" y2="754.2" stroke="#0000ff" stroke-width="2.7" stroke-dasharray="32.7 5.6 7.1 5 32.7 4.7 8.1 100" />
<line x1="675.6" y1="859.3" x2="753" y2="887" stroke="#ff0000" stroke-width="2.9" stroke-dasharray="32.3 4.6 8.3 4.5 32.6 100" />
<line x1="675.6" y1="854.4" x2="716.8" y2="835.2" stroke="#00e000" stroke-width="2.9" stroke-dasharray="32.7 4 8.6 100" />
<line x1="720.3" y1="833.1" x2="748.7" y2="820.3" stroke="#4fb23a" stroke-opacity="0.75" stroke-width="2.4"/>
<ellipse cx="669" cy="857.2" rx="8.2" ry="2.6" fill="#bdbdbd" fill-opacity="0.7"/>
<circle cx="668.9" cy="857.2" r="5.5" fill="#ececec" fill-opacity="0.85" stroke="#7a7a7a" stroke-width="1.5"/>
<ellipse cx="1858" cy="240" rx="38" ry="9" fill="#000" fill-opacity="0.13" filter="url(#b4)"/>
<polygon points="1822.4,186.4 1861.6,194.3 1860.5,244.4 1823.5,231.8" fill="#e9e9e9" stroke="#d0d0d0" stroke-width="0.8" stroke-linejoin="round" />
<polygon points="1861.6,194.3 1889.8,184.1 1887.8,228.4 1860.5,244.4" fill="#e2e2e2" stroke="#c8c8c8" stroke-width="0.8" stroke-linejoin="round" />
<polygon points="1822.4,186.4 1853.7,179.0 1889.8,184.1 1861.6,194.3" fill="#efefef" stroke="#d4d4d4" stroke-width="0.8" stroke-linejoin="round" />
<line x1="1820.7" y1="178.4" x2="1823.5" y2="231.8" stroke="#6c6cff" stroke-width="1.6"/>
<line x1="1823.5" y1="232.4" x2="1868.4" y2="248.9" stroke="#f08a8a" stroke-width="1.8"/>
<text x="1815.5" y="175.5" font-family="Liberation Sans, sans-serif" font-size="13" fill="#7a7aff">Z</text>
<text x="1869.5" y="256" font-family="Liberation Sans, sans-serif" font-size="12" fill="#f08080">X</text>
<text transform="matrix(1 0.2 0 1 1828.5 221)" font-family="Liberation Sans, Noto Sans CJK JP, sans-serif" font-size="25" fill="#8f9296">前</text>
<text transform="matrix(0.78 -0.3 0 1 1865.5 227)" font-family="Liberation Sans, Noto Sans CJK JP, sans-serif" font-size="25" fill="#8f9296">右</text>
<text transform="matrix(1 0.2 -0.8 0.19 1846 185.5)" font-family="Liberation Sans, Noto Sans CJK JP, sans-serif" font-size="14" fill="#c4c6c8">上</text>
</g></svg>
<svg width="1928" height="146" viewBox="0 0 1928 146" style="position:absolute;left:0;top:0">
<rect x="0" y="0" width="1920" height="8" fill="#000"/>
<rect x="0" y="8" width="1920" height="23" fill="#fff"/>
<rect x="0" y="31" width="1920" height="32" fill="#cccccc"/>
<rect x="0" y="63" width="1920" height="82" fill="#f2f2f2"/>
<rect x="0" y="144" width="1920" height="1.2" fill="#dcdcdc"/>
<rect x="1920" y="0" width="8" height="26" fill="#fff"/><rect x="1920" y="26" width="8" height="120" fill="#f8f8f8"/>
<rect x="3.5" y="11.5" width="13" height="15" rx="2" fill="#f58220"/><rect x="3.5" y="21" width="13" height="5.5" rx="1.5" fill="#b3541a"/>
<text x="7.2" y="20.3" font-family="Liberation Sans, Noto Sans CJK JP, sans-serif" font-size="8" font-weight="bold" fill="#fff">F</text>
<text x="23.2" y="24.3" font-family="Liberation Sans, Noto Sans CJK JP, sans-serif" font-size="12.6" font-weight="normal" fill="#000" textLength="237.4" lengthAdjust="spacingAndGlyphs" >Autodesk Fusion 360 (個人用 - 商用利用不可)</text>
<path d="M1799.2 18.5h10.5" stroke="#000" stroke-width="1" fill="none"/>
<path d="M1844.5 16.5h7.5v7.5h-7.5z M1846.8 16.5v-2.3h7.5v7.5h-2.3" stroke="#000" stroke-width="1" fill="none"/>
<path d="M1890 13l10 10M1900 13l-10 10" stroke="#000" stroke-width="1.1" fill="none"/>
<path d="M193 63V39a4 4 0 0 1 4-4H922a4 4 0 0 1 4 4V63z" fill="#f2f2f2"/>
<path d="M930.5 63V39a4 4 0 0 1 4-4H1659a4 4 0 0 1 4 4V63z" fill="#bbbbbb"/>
<path d="M1667.5 63V39a4 4 0 0 1 4-4H1691a4 4 0 0 1 4 4V63z" fill="#bebebe"/>
<path d="M1675.5 48h11M1681 42.5v11" stroke="#666" stroke-width="2" fill="none"/>
<path d="M505 44.5l7-2.2 8 2.2v7.5l-7 3.5-8-3.8z" fill="#8a8a8a"/><path d="M505 44.5l8 2.5 7-2.5-8-2.2z" fill="#b5b5b5"/><path d="M513 47v8.5l7-3.5v-7.5z" fill="#6f6f6f"/>
<text x="525.1" y="53.8" font-family="Liberation Sans, Noto Sans CJK JP, sans-serif" font-size="12.5" font-weight="normal" fill="#333" textLength="75.7" lengthAdjust="spacingAndGlyphs" >consolet18 v8</text>
<path d="M910.5 44.8l8.5 8.5M919 44.8l-8.5 8.5" stroke="#555" stroke-width="1.3" fill="none"/>
<path d="M1257 44.5l7-2.2 8 2.2v7.5l-7 3.5-8-3.8z" fill="#a6a6a6"/><path d="M1257 44.5l8 2.5 7-2.5-8-2.2z" fill="#cfcfcf"/><path d="M1265 47v8.5l7-3.5v-7.5z" fill="#8f8f8f"/>
<text x="1275.5" y="53.8" font-family="Liberation Sans, Noto Sans CJK JP, sans-serif" font-size="12.5" font-weight="normal" fill="#666" textLength="48.4" lengthAdjust="spacingAndGlyphs" >kan_1 v1</text>
<path d="M1647.7 45l8 8M1655.7 45l-8 8" stroke="#777" stroke-width="1.2" fill="none"/>
<rect x="9.0" y="40.0" width="4" height="4" fill="#5a5a5a"/>
<rect x="9.0" y="45.0" width="4" height="4" fill="#5a5a5a"/>
<rect x="9.0" y="50.0" width="4" height="4" fill="#5a5a5a"/>
<rect x="14.0" y="40.0" width="4" height="4" fill="#5a5a5a"/>
<rect x="14.0" y="45.0" width="4" height="4" fill="#5a5a5a"/>
<rect x="14.0" y="50.0" width="4" height="4" fill="#5a5a5a"/>
<rect x="19.0" y="40.0" width="4" height="4" fill="#5a5a5a"/>
<rect x="19.0" y="45.0" width="4" height="4" fill="#5a5a5a"/>
<rect x="19.0" y="50.0" width="4" height="4" fill="#5a5a5a"/>
<path d="M42 39h8.5l4.5 4.5V55H42z" fill="#5a5a5a"/><path d="M50.5 39v4.5h4.5z" fill="#ccc"/>
<polygon points="61.5,44.7 67.5,44.7 64.5,48.3" fill="#5a5a5a"/>
<path d="M87.5 40h12l2 2v12.5h-14z" fill="#8e8e8e"/><rect x="90" y="40.8" width="7.5" height="4.5" fill="#ccc"/><rect x="90.5" y="48.5" width="8" height="6" fill="#ccc"/><rect x="93" y="50" width="3" height="4.5" fill="#8e8e8e"/>
<path d="M132.5 53c0.5-5-2.5-7.5-8-7.5h-3" stroke="#5a5a5a" stroke-width="2" fill="none"/><path d="M119.8 45.5l5.2-4.3v8.6z" fill="#5a5a5a"/>
<polygon points="140.5,44.7 146.5,44.7 143.5,48.3" fill="#5a5a5a"/>
<path d="M160.5 53c-0.5-5 2.5-7.5 8-7.5h3" stroke="#999" stroke-width="2" fill="none"/><path d="M173.2 45.5l-5.2-4.3v8.6z" fill="#999"/>
<polygon points="180.0,44.7 186.0,44.7 183.0,48.3" fill="#999"/>
<path d="M1706 41h9l-1 6-4 4v5h-4z" fill="#5a5a5a"/><path d="M1712 53l7.5-7.5 2 2-7.5 7.5-3 1z" fill="#5a5a5a" stroke="#ccc" stroke-width="0.6"/>
<text x="1726.8" y="51.2" font-family="Liberation Sans, Noto Sans CJK JP, sans-serif" font-size="11" font-weight="bold" fill="#333" textLength="25.7" lengthAdjust="spacingAndGlyphs" >10/10</text>
<circle cx="1788" cy="47" r="6.8" fill="#d6d6d6" stroke="#666" stroke-width="2"/><path d="M1788 43v4.3h3.6" stroke="#666" stroke-width="1.6" fill="none"/>
<path d="M1821.2 39.5c-3.6 0-4.6 3-4.6 6 0 3-1.4 4.5-2.4 5.5h14c-1-1-2.4-2.5-2.4-5.5 0-3-1-6-4.600000000000001-6z" fill="#666"/><path d="M1819.2 52.3h4l-2 1.8z" fill="#666"/><rect x="1820.5" y="38.3" width="1.4" height="2" fill="#666"/>
<circle cx="1854" cy="47" r="7.8" fill="#666"/><text x="1850.6" y="51.4" font-family="Liberation Sans, Noto Sans CJK JP, sans-serif" font-size="12.5" font-weight="bold" fill="#ccc">?</text>
<defs><linearGradient id="av" x1="0" y1="0" x2="0" y2="1"><stop offset="0" stop-color="#b3c0d2"/><stop offset="1" stop-color="#8a9bb5"/></linearGradient><clipPath id="avc"><circle cx="1894.9" cy="47" r="11.6"/></clipPath></defs>
<circle cx="1894.9" cy="47" r="11.6" fill="url(#av)"/><g clip-path="url(#avc)" fill="#55657c"><ellipse cx="1894.9" cy="44" rx="5.6" ry="7"/><path d="M1892.5 49h4.8v4c3 1 7 2 9 4v4h-23v-4c2-2 6-3 9-4z"/></g>
<rect x="12.5" y="74" width="108.5" height="59.5" rx="5" fill="#f2f2f2" stroke="#dadada" stroke-width="1.2"/>
<text x="42.0" y="107.0" font-family="Liberation Sans, Noto Sans CJK JP, sans-serif" font-size="11.5" font-weight="bold" fill="#111" textLength="36.5" lengthAdjust="spacingAndGlyphs" >デザイン</text>
<polygon points="85.0,101.9 91.0,101.9 88.0,105.5" fill="#222"/>
<text x="149.4" y="77.8" font-family="Liberation Sans, Noto Sans CJK JP, sans-serif" font-size="11.5" font-weight="bold" fill="#0b8ed6" textLength="32.5" lengthAdjust="spacingAndGlyphs" >ソリッド</text>
<rect x="138.5" y="84.5" width="56" height="3" rx="1.2" fill="#0a93dc"/>
<text x="227.7" y="77.8" font-family="Liberation Sans, Noto Sans CJK JP, sans-serif" font-size="11.5" font-weight="normal" fill="#333" textLength="39.5" lengthAdjust="spacingAndGlyphs" >サーフェス</text>
<text x="314.7" y="77.8" font-family="Liberation Sans, Noto Sans CJK JP, sans-serif" font-size="11.5" font-weight="normal" fill="#333" textLength="29.9" lengthAdjust="spacingAndGlyphs" >メッシュ</text>
<text x="388.4" y="77.8" font-family="Liberation Sans, Noto Sans CJK JP, sans-serif" font-size="11.5" font-weight="normal" fill="#333" textLength="30.5" lengthAdjust="spacingAndGlyphs" >フォーム</text>
<text x="466.4" y="77.8" font-family="Liberation Sans, Noto Sans CJK JP, sans-serif" font-size="11.5" font-weight="normal" fill="#333" textLength="53.1" lengthAdjust="spacingAndGlyphs" >シート メタル</text>
<text x="564.3" y="77.8" font-family="Liberation Sans, Noto Sans CJK JP, sans-serif" font-size="11.5" font-weight="normal" fill="#333" textLength="45.8" lengthAdjust="spacingAndGlyphs" >プラスチック</text>
<text x="657.1" y="77.8" font-family="Liberation Sans, Noto Sans CJK JP, sans-serif" font-size="11.5" font-weight="normal" fill="#333" textLength="52.4" lengthAdjust="spacingAndGlyphs" >ユーティリティ</text>
<rect x="350.6" y="90" width="1.3" height="50" fill="#d9d9d9"/>
<rect x="619.4" y="90" width="1.3" height="50" fill="#d9d9d9"/>
<rect x="716.4" y="90" width="1.3" height="50" fill="#d9d9d9"/>
<rect x="775.4" y="90" width="1.3" height="50" fill="#d9d9d9"/>
<rect x="834.2" y="90" width="1.3" height="50" fill="#d9d9d9"/>
<rect x="893.3" y="90" width="1.3" height="50" fill="#d9d9d9"/>
<text x="220.1" y="138.6" font-family="Liberation Sans, Noto Sans CJK JP, sans-serif" font-size="11.5" font-weight="normal" fill="#1a1a1a" textLength="20.0" lengthAdjust="spacingAndGlyphs" >作成</text>
<polygon points="244.0,132.4 250.0,132.4 247.0,136.0" fill="#222"/>
<text x="467.9" y="138.6" font-family="Liberation Sans, Noto Sans CJK JP, sans-serif" font-size="11.5" font-weight="normal" fill="#1a1a1a" textLength="20.1" lengthAdjust="spacingAndGlyphs" >修正</text>
<polygon points="491.9,132.4 497.9,132.4 494.9,136.0" fill="#222"/>
<text x="642.9" y="138.6" font-family="Liberation Sans, Noto Sans CJK JP, sans-serif" font-size="11.5" font-weight="normal" fill="#1a1a1a" textLength="38.8" lengthAdjust="spacingAndGlyphs" >アセンブリ</text>
<polygon points="685.2,132.4 691.2,132.4 688.2,136.0" fill="#222"/>
<text x="731.1" y="138.6" font-family="Liberation Sans, Noto Sans CJK JP, sans-serif" font-size="11.5" font-weight="normal" fill="#1a1a1a" textLength="20.3" lengthAdjust="spacingAndGlyphs" >構築</text>
<polygon points="755.1,132.4 761.1,132.4 758.1,136.0" fill="#222"/>
<text x="789.8" y="138.6" font-family="Liberation Sans, Noto Sans CJK JP, sans-serif" font-size="11.5" font-weight="normal" fill="#1a1a1a" textLength="20.7" lengthAdjust="spacingAndGlyphs" >検査</text>
<polygon points="814.0,132.4 820.0,132.4 817.0,136.0" fill="#222"/>
<text x="848.9" y="138.6" font-family="Liberation Sans, Noto Sans CJK JP, sans-serif" font-size="11.5" font-weight="normal" fill="#1a1a1a" textLength="20.3" lengthAdjust="spacingAndGlyphs" >挿入</text>
<polygon points="872.7,132.4 878.7,132.4 875.7,136.0" fill="#222"/>
<text x="907.8" y="138.6" font-family="Liberation Sans, Noto Sans CJK JP, sans-serif" font-size="11.5" font-weight="normal" fill="#1a1a1a" textLength="20.5" lengthAdjust="spacingAndGlyphs" >選択</text>
<polygon points="932.1,132.4 938.1,132.4 935.1,136.0" fill="#222"/>
<path d="M138.5 118.5V91.5H165.5V105M138.5 118.5H155" fill="none" stroke="#555" stroke-width="1"/>
<rect x="137.0" y="90.0" width="3" height="3" fill="#555"/>
<rect x="164.0" y="90.0" width="3" height="3" fill="#555"/>
<rect x="137.0" y="117.0" width="3" height="3" fill="#555"/>
<path d="M145.4 98.6H158.5M145.4 98.6V111.4" stroke="#555" stroke-width="1" fill="none"/><path d="M158.5 98.6Q157.5 110 145.4 111.4" stroke="#555" stroke-width="1" fill="none"/>
<rect x="143.9" y="97.1" width="3" height="3" fill="#555"/>
<rect x="157.0" y="97.1" width="3" height="3" fill="#555"/>
<rect x="143.9" y="109.9" width="3" height="3" fill="#555"/>
<path d="M155 115h14M162 108v14" stroke="#1e9e3e" stroke-width="3.6" fill="none"/>
<polygon points="181.3,117.1 199,117.1 204.7,111.4 204.7,115.4 199,121.4 181.3,121.4" fill="#b9b9b9"/><polygon points="199,117.1 204.7,111.4 204.7,115.4 199,121.4" fill="#a0a0a0"/>
<polygon points="181.3,96 199,96 199,117.1 181.3,117.1" fill="#6aade4"/><polygon points="181.3,96 187,90.3 204.7,90.3 199,96" fill="#8ecbfa"/><polygon points="199,96 204.7,90.3 204.7,111.4 199,117.1" fill="#4a90cf"/>
<path d="M208.7 116V93" stroke="#222" stroke-width="1.2"/><path d="M206.3 95.5l2.4-4.5 2.4 4.5z" fill="#222"/>
<path d="M223.6 105.1Q238.4 92.5 254.4 104L249.2 108.5Q238.4 101.5 228.1 108.3Z" fill="#8ecbfa"/>
<path d="M223.6 105.1L228.1 108.3L228.7 118.8L223.6 113.7Z" fill="#4a90cf"/>
<path d="M228.1 108.3Q238.4 101.5 249.2 108.5V118.3Q238.4 111.5 228.7 118.8Z" fill="#6aade4"/>
<path d="M249.2 108.5L254.4 104V113.2L249.2 118.3Z" fill="#fff" stroke="#444" stroke-width="1"/>
<path d="M252.6 97.3Q238.5 88 224.5 97" stroke="#333" stroke-width="1.1" fill="none"/><path d="M223.3 98l5-3.4-0.6 4.2z" fill="#333"/>
<polygon points="266.4,98.8 290.9,98.8 290.9,121.4 266.4,121.4" fill="#dcdcdc" stroke="#555" stroke-width="1"/>
<polygon points="266.4,98.8 275,90.3 297.7,90.3 290.9,98.8" fill="#f0f0f0" stroke="#555" stroke-width="1"/>
<polygon points="290.9,98.8 297.7,90.3 297.7,114.2 290.9,121.4" fill="#bdbdbd" stroke="#555" stroke-width="1"/>
<circle cx="278" cy="110" r="8.4" fill="#fff" stroke="#555" stroke-width="1"/>
<path d="M273 104.3A7 7 0 1 0 284.8 112.5Q277 111 276.500 103.300Z" fill="#6aade4"/>
<path d="M315.8 95.4H330.3M312.4 98.6V113.4M315.8 116.7H330.3" stroke="#555" stroke-width="1.1" fill="none"/>
<rect x="309.3" y="92.4" width="6.3" height="6.3" fill="#fff" stroke="#555" stroke-width="1"/>
<rect x="330.3" y="92.2" width="6.6" height="6.6" fill="#5ea9e6"/>
<rect x="309.1" y="113.4" width="6.6" height="6.6" fill="#5ea9e6"/>
<rect x="330.3" y="113.4" width="6.6" height="6.6" fill="#5ea9e6"/>
<polygon points="364.2,96.3 370.3,90.5 375,90.5 371.1,96.3 371.1,121.5 364.2,121.5" fill="#dcdcdc" stroke="#555" stroke-width="1"/>
<polygon points="371.1,96.3 379.8,96.3 379.8,121.5 371.1,121.5" fill="#6aade4"/><polygon points="371.1,96.3 376.9,90.5 385.6,90.5 379.8,96.3" fill="#8ecbfa"/><polygon points="379.8,96.3 385.6,90.5 385.6,115.2 379.8,121.5" fill="#4a90cf"/>
<path d="M383.7 105.5H391" stroke="#222" stroke-width="1.2"/><path d="M389.3 103.2l4 2.3-4 2.3z" fill="#222"/><rect x="383" y="104" width="3" height="3" fill="#fff" opacity="0.0"/>
<path d="M406.3 98.5L413.9 90.5H422Q437.5 93 437.9 106V113.800L430 121.500H406.300Z" fill="#dcdcdc" stroke="#555" stroke-width="1"/>
<path d="M430 121.500V109.500L437.900 104.500V113.800Z" fill="#bdbdbd" stroke="#555" stroke-width="0.8"/>
<path d="M418 95.5L425.500 90.200Q437.500 92.500 437.900 104.500L430 109.500Q429.500 98 418 95.500Z" fill="#6aade4"/>
<polygon points="449.5,98.5 472.7,98.5 472.7,121.5 449.5,121.5" fill="#e6e6e6" stroke="#555" stroke-width="1"/>
<polygon points="449.5,98.5 457.5,90.5 480.7,90.5 472.7,98.5" fill="#f0f0f0" stroke="#555" stroke-width="1"/>
<polygon points="472.7,98.5 480.7,90.5 480.7,113.8 472.7,121.5" fill="#bdbdbd" stroke="#555" stroke-width="1"/>
<rect x="453.100" y="102.100" width="16" height="16" fill="#8ecbfa"/><polygon points="453.100,102.100 460.500,102.100 460.500,111 453.100,118.100" fill="#4a90cf"/><rect x="460.500" y="102.100" width="8.600" height="8.600" fill="#e6e6e6"/>
<polygon points="492,104.3 509.7,104.3 509.7,121.5 492,121.5" fill="#6aade4"/><polygon points="502.5,94.2 519.2,94.2 519.2,111.6 509.7,111.6 509.7,104.3 502.5,104.3" fill="#6aade4"/>
<polygon points="492,104.3 496.7,100 502.5,100 502.5,104.3" fill="#8ecbfa"/><polygon points="502.5,94.2 507.6,90.5 524,90.5 519.2,94.2" fill="#8ecbfa"/>
<polygon points="519.2,94.2 524,90.5 524,105.8 519.2,111.6" fill="#4a90cf"/><polygon points="509.7,111.6 514.1,111.6 514.1,116.7 509.7,121.5" fill="#4a90cf"/>
<polygon points="537.500,110 559,110 565,104.500 565,115.500 559,121 537.500,121" fill="#dcdcdc" stroke="#555" stroke-width="0.9"/>
<polygon points="537.500,97 559,97 559,106.500 537.500,106.500" fill="#6aade4"/><polygon points="537.500,97 543.500,90.500 565,90.500 559,97" fill="#8ecbfa"/><polygon points="559,97 565,90.500 565,100.500 559,106.500" fill="#4a90cf"/>
<path d="M535.2 108.500H559.500L567.100 101" stroke="#2b8fe0" stroke-width="1.300" fill="none"/>
<path d="M594 93.500V118.700M581.400 106.100H606.600" stroke="#333" stroke-width="2.200" fill="none"/>
<path d="M594 90.700l4.300 5.800h-8.600zM594 121.500l4.300-5.800h-8.600zM578.800 106.100l5.800-4.300v8.600zM609.200 106.100l-5.800-4.300v8.600z" fill="#333"/>
<polygon points="632,106 643,106 643,121.500 632,121.500" fill="#dcdcdc" stroke="#555" stroke-width="0.8"/><polygon points="644,106 655,106 655,121.500 644,121.500" fill="#dcdcdc" stroke="#555" stroke-width="0.8"/><polygon points="644,106 648.500,102 659.500,102 655,106" fill="#f0f0f0" stroke="#555" stroke-width="0.800"/><polygon points="655,106 659.500,102 659.500,117 655,121.500" fill="#bdbdbd" stroke="#555" stroke-width="0.800"/>
<polygon points="632,95.500 643.500,95.500 643.500,106 632,106" fill="#6aade4"/><polygon points="632,95.500 636.500,91.500 648,91.500 643.500,95.500" fill="#8ecbfa"/><polygon points="643.500,95.500 648,91.500 648,102 643.500,106" fill="#4a90cf"/>
<polygon points="663.3,98.1 658.8,99.4 661.1,103.4 657.1,101.1 655.8,105.6 654.5,101.1 650.5,103.4 652.8,99.4 648.3,98.1 652.8,96.8 650.5,92.8 654.5,95.1 655.8,90.6 657.1,95.1 661.1,92.8 658.8,96.8" fill="#f59b0e"/>
<path d="M677 97.500L683 91.500H688.500V103.500L683 108.500V114L677 118.500Z" fill="#d2d2d2" stroke="#666" stroke-width="0.900"/><path d="M683 91.500V108.500" stroke="#888" stroke-width="0.8"/>
<path d="M698.500 93.500L705 100.500V119.500L698.500 113V109L692.500 112V103.500L698.500 100.500Z" fill="#cfcfcf" stroke="#666" stroke-width="0.900"/>
<path d="M695.800 98V103.500M686.200 104V109.500" stroke="#2b8fe0" stroke-width="1.200"/>
<polygon points="732.9,99.9 741.7,91.1 749.6,91.1 740.8,99.9" fill="#f0f0f0" stroke="#555" stroke-width="0.9"/><polygon points="732.9,99.9 740.8,99.9 740.8,120.2 732.9,120.2" fill="#dcdcdc" stroke="#555" stroke-width="0.9"/>
<polygon points="741.7,100.2 750.1,90.7 750.1,110.5 741.7,120.5" fill="#5fc27e"/>
<polygon points="753.1,100.2 762,90.7 762,110.5 753.1,120.5" fill="#e3966a"/>
<rect x="792" y="108.300" width="28" height="5.400" fill="#f5a51e"/>
<rect x="794.8" y="108.300" width="0.800" height="2.6" fill="#a06a10"/>
<rect x="797.6" y="108.300" width="0.800" height="1.6" fill="#a06a10"/>
<rect x="800.4" y="108.300" width="0.800" height="2.6" fill="#a06a10"/>
<rect x="803.2" y="108.300" width="0.800" height="1.6" fill="#a06a10"/>
<rect x="806.0" y="108.300" width="0.800" height="2.6" fill="#a06a10"/>
<rect x="808.8" y="108.300" width="0.800" height="1.6" fill="#a06a10"/>
<rect x="811.6" y="108.300" width="0.800" height="2.6" fill="#a06a10"/>
<rect x="814.4" y="108.300" width="0.800" height="1.6" fill="#a06a10"/>
<rect x="817.2" y="108.300" width="0.800" height="2.6" fill="#a06a10"/>
<path d="M792.500 98V107M819.500 98V107M794 102.500H818" stroke="#555" stroke-width="1" fill="none"/><path d="M793 102.500l3.500-2v4zM819 102.500l-3.500-2v4z" fill="#555"/>
<rect x="850.100" y="91.100" width="28.800" height="28.700" fill="#7ec5f7"/><path d="M850.100 112L858 103L864 110L870 106L878.900 113V119.800H850.100Z" fill="#3f8fcc"/><circle cx="871" cy="98.500" r="3" fill="#fdf5c8"/><rect x="850.100" y="91.100" width="28.800" height="28.700" fill="none" stroke="#3f8fcc" stroke-width="0.800"/>
<rect x="904.800" y="86.600" width="38.300" height="38.300" fill="#0f93d9"/><rect x="908.300" y="90.200" width="27.400" height="21.100" fill="none" stroke="#9de07a" stroke-width="1" stroke-dasharray="3.5 2"/>
<path d="M928.600 104.300V119.500L932 116.500L934.500 122L937 121L934.500 115.500L939.200 115.500Z" fill="#fff"/>
</svg>
<svg width="320" height="903" viewBox="0 145 320 903" style="position:absolute;left:0;top:145px">
<defs><linearGradient id="to" x1="0" y1="1" x2="1" y2="0"><stop offset="0" stop-color="#6e6e6e"/><stop offset="1" stop-color="#d8d8d8"/></linearGradient><linearGradient id="cy" x1="0" y1="0" x2="1" y2="0"><stop offset="0" stop-color="#ffffff"/><stop offset="0.55" stop-color="#f2f2f6"/><stop offset="1" stop-color="#b9bac6"/></linearGradient></defs>
<rect x="4.500" y="149.500" width="299" height="23.500" fill="#f2f2f2" stroke="#c9c9c9" stroke-width="1"/>
<path d="M14 157.500v7l-4.500-3.500zM19.500 157.500v7l-4.500-3.500z" fill="#333"/>
<text x="28.5" y="164.6" font-family="Liberation Sans, Noto Sans CJK JP, sans-serif" font-size="11" font-weight="normal" fill="#333" textLength="31.5" lengthAdjust="spacingAndGlyphs" >ブラウザ</text>
<circle cx="287.300" cy="161.300" r="4.600" fill="#222"/><rect x="284.600" y="160.600" width="5.400" height="1.500" fill="#fff"/>
<rect x="299.300" y="155.500" width="1" height="12" fill="#666"/><rect x="301.500" y="157" width="0.800" height="9" fill="#aaa"/>
<rect x="8" y="179" width="6" height="817" fill="#c9cacc"/><rect x="8" y="183.500" width="6" height="25" rx="3" fill="#a2a3a5"/>
<rect x="58.0" y="179.0" width="87.9" height="20" fill="#f0f0f0" fill-opacity="0.93"/>
<path d="M40.8 183.4L48.6 189.0L40.8 194.6Z" fill="#ececf0" stroke="#3c3c3c" stroke-width="1.3" stroke-linejoin="round"/>
<path d="M61.0 182.4h6.5l1 1.600h8.500v11h-16z" fill="#9a9a9a"/><path d="M61.0 185.4h16" stroke="#c4c4c4" stroke-width="0.8"/>
<text x="89.8" y="193.2" font-family="Liberation Sans, Noto Sans CJK JP, sans-serif" font-size="11.5" font-weight="300" fill="#111" textLength="45.1" lengthAdjust="spacingAndGlyphs" >ビュー管理</text>
<rect x="58.0" y="203.0" width="88.9" height="20" fill="#f0f0f0" fill-opacity="0.93"/>
<path d="M40.8 207.4L48.6 213.0L40.8 218.6Z" fill="#ececf0" stroke="#3c3c3c" stroke-width="1.3" stroke-linejoin="round"/>
<path d="M60.9 213.0Q68.9 204.4 76.9 213.0Q68.9 221.6 60.9 213.0Z" fill="#9d9d9d"/><circle cx="68.9" cy="213.0" r="3.3" fill="#f1f1f1"/><circle cx="68.9" cy="213.0" r="1.8" fill="#9d9d9d"/>
<path d="M85.7 206.4h6.5l1 1.600h8.500v11h-16z" fill="#9a9a9a"/><path d="M85.7 209.4h16" stroke="#c4c4c4" stroke-width="0.8"/>
<text x="115.7" y="217.2" font-family="Liberation Sans, Noto Sans CJK JP, sans-serif" font-size="11.5" font-weight="300" fill="#111" textLength="20.2" lengthAdjust="spacingAndGlyphs" >原点</text>
<rect x="58.0" y="227.0" width="92.3" height="20" fill="#f0f0f0" fill-opacity="0.93"/>
<path d="M39.2 242.3L49.8 242.3L49.8 232.1Z" fill="url(#to)" stroke="#333" stroke-width="1" stroke-linejoin="round"/>
<path d="M60.9 237.0Q68.9 228.4 76.9 237.0Q68.9 245.6 60.9 237.0Z" fill="#9d9d9d"/><circle cx="68.9" cy="237.0" r="3.3" fill="#f1f1f1"/><circle cx="68.9" cy="237.0" r="1.8" fill="#9d9d9d"/>
<path d="M85.7 230.4h6.5l1 1.600h8.500v11h-16z" fill="#9a9a9a"/><path d="M85.7 233.4h16" stroke="#c4c4c4" stroke-width="0.8"/>
<text x="115.7" y="241.2" font-family="Liberation Sans, Noto Sans CJK JP, sans-serif" font-size="11.5" font-weight="300" fill="#111" textLength="23.6" lengthAdjust="spacingAndGlyphs" >ボディ</text>
<rect x="76.0" y="251.0" width="172.0" height="20" fill="#f0f0f0" fill-opacity="0.93"/>
<path d="M58.8 255.4L66.6 261.0L58.8 266.6Z" fill="#ececf0" stroke="#3c3c3c" stroke-width="1.3" stroke-linejoin="round"/>
<path d="M78.9 261.0Q86.9 252.4 94.9 261.0Q86.9 269.6 78.9 261.0Z" fill="#9d9d9d"/><circle cx="86.9" cy="261.0" r="3.3" fill="#f1f1f1"/><circle cx="86.9" cy="261.0" r="1.8" fill="#9d9d9d"/>
<path d="M103.7 254.4h6.5l1 1.600h8.500v11h-16z" fill="#9a9a9a"/><path d="M103.7 257.4h16" stroke="#c4c4c4" stroke-width="0.8"/>
<text x="133.2" y="265.2" font-family="Liberation Sans, Noto Sans CJK JP, sans-serif" font-size="11.5" font-weight="300" fill="#111" textLength="103.8" lengthAdjust="spacingAndGlyphs" >コントローラボックス (16)</text>
<rect x="76.0" y="275.0" width="120.8" height="20" fill="#f0f0f0" fill-opacity="0.93"/>
<path d="M57.2 290.3L67.8 290.3L67.8 280.1Z" fill="url(#to)" stroke="#333" stroke-width="1" stroke-linejoin="round"/>
<path d="M78.9 285.0Q86.9 276.4 94.9 285.0Q86.9 293.6 78.9 285.0Z" fill="#9d9d9d"/><circle cx="86.9" cy="285.0" r="3.3" fill="#f1f1f1"/><circle cx="86.9" cy="285.0" r="1.8" fill="#9d9d9d"/>
<path d="M103.7 278.4h6.5l1 1.600h8.500v11h-16z" fill="#9a9a9a"/><path d="M103.7 281.4h16" stroke="#c4c4c4" stroke-width="0.8"/>
<text x="133.2" y="289.2" font-family="Liberation Sans, Noto Sans CJK JP, sans-serif" font-size="11.5" font-weight="300" fill="#111" textLength="52.6" lengthAdjust="spacingAndGlyphs" >ボディ後 (4)</text>
<rect x="94.0" y="299.0" width="154.0" height="20" fill="#f0f0f0" fill-opacity="0.93"/>
<path d="M76.8 303.4L84.6 309.0L76.8 314.6Z" fill="#ececf0" stroke="#3c3c3c" stroke-width="1.3" stroke-linejoin="round"/>
<path d="M96.9 309.0Q104.9 300.4 112.9 309.0Q104.9 317.6 96.9 309.0Z" fill="#9d9d9d"/><circle cx="104.9" cy="309.0" r="3.3" fill="#f1f1f1"/><circle cx="104.9" cy="309.0" r="1.8" fill="#9d9d9d"/>
<path d="M121.7 302.4h6.5l1 1.600h8.500v11h-16z" fill="#9a9a9a"/><path d="M121.7 305.4h16" stroke="#c4c4c4" stroke-width="0.8"/>
<text x="151.6" y="313.2" font-family="Liberation Sans, Noto Sans CJK JP, sans-serif" font-size="11.5" font-weight="300" fill="#111" textLength="85.4" lengthAdjust="spacingAndGlyphs" >ボディ後右側面 (6)</text>
<rect x="94.0" y="323.0" width="154.0" height="20" fill="#f0f0f0" fill-opacity="0.93"/>
<path d="M76.8 327.4L84.6 333.0L76.8 338.6Z" fill="#ececf0" stroke="#3c3c3c" stroke-width="1.3" stroke-linejoin="round"/>
<path d="M96.9 333.0Q104.9 324.4 112.9 333.0Q104.9 341.6 96.9 333.0Z" fill="#9d9d9d"/><circle cx="104.9" cy="333.0" r="3.3" fill="#f1f1f1"/><circle cx="104.9" cy="333.0" r="1.8" fill="#9d9d9d"/>
<path d="M121.7 326.4h6.5l1 1.600h8.500v11h-16z" fill="#9a9a9a"/><path d="M121.7 329.4h16" stroke="#c4c4c4" stroke-width="0.8"/>
<text x="151.6" y="337.2" font-family="Liberation Sans, Noto Sans CJK JP, sans-serif" font-size="11.5" font-weight="300" fill="#111" textLength="85.4" lengthAdjust="spacingAndGlyphs" >ボディ後左側面 (6)</text>
<rect x="94.0" y="347.0" width="143.0" height="20" fill="#f0f0f0" fill-opacity="0.93"/>
<path d="M76.8 351.4L84.6 357.0L76.8 362.6Z" fill="#ececf0" stroke="#3c3c3c" stroke-width="1.3" stroke-linejoin="round"/>
<path d="M96.9 357.0Q104.9 348.4 112.9 357.0Q104.9 365.6 96.9 357.0Z" fill="#9d9d9d"/><circle cx="104.9" cy="357.0" r="3.3" fill="#f1f1f1"/><circle cx="104.9" cy="357.0" r="1.8" fill="#9d9d9d"/>
<path d="M121.7 350.4h6.5l1 1.600h8.500v11h-16z" fill="#9a9a9a"/><path d="M121.7 353.4h16" stroke="#c4c4c4" stroke-width="0.8"/>
<text x="151.6" y="361.2" font-family="Liberation Sans, Noto Sans CJK JP, sans-serif" font-size="11.5" font-weight="300" fill="#111" textLength="74.4" lengthAdjust="spacingAndGlyphs" >ボディ後背面 (8)</text>
<rect x="94.0" y="371.0" width="124.3" height="20" fill="#f0f0f0" fill-opacity="0.93"/>
<path d="M96.9 381.0Q104.9 372.4 112.9 381.0Q104.9 389.6 96.9 381.0Z" fill="#9d9d9d"/><circle cx="104.9" cy="381.0" r="3.3" fill="#f1f1f1"/><circle cx="104.9" cy="381.0" r="1.8" fill="#9d9d9d"/>
<rect x="122.0" y="373.2" width="15" height="15.500" rx="3.500" fill="url(#cy)" stroke="#3a3a4a" stroke-width="1.100"/><ellipse cx="129.5" cy="375.8" rx="6.300" ry="1.800" fill="#fff" stroke="#c8c8d0" stroke-width="0.5"/>
<text x="151.6" y="385.2" font-family="Liberation Sans, Noto Sans CJK JP, sans-serif" font-size="11.5" font-weight="300" fill="#111" textLength="55.7" lengthAdjust="spacingAndGlyphs" >ボディ後天面</text>
<rect x="76.0" y="395.0" width="120.8" height="20" fill="#f0f0f0" fill-opacity="0.93"/>
<path d="M58.8 399.4L66.6 405.0L58.8 410.6Z" fill="#ececf0" stroke="#3c3c3c" stroke-width="1.3" stroke-linejoin="round"/>
<path d="M78.9 405.0Q86.9 396.4 94.9 405.0Q86.9 413.6 78.9 405.0Z" fill="#9d9d9d"/><circle cx="86.9" cy="405.0" r="3.3" fill="#f1f1f1"/><circle cx="86.9" cy="405.0" r="1.8" fill="#9d9d9d"/>
<path d="M103.7 398.4h6.5l1 1.600h8.500v11h-16z" fill="#9a9a9a"/><path d="M103.7 401.4h16" stroke="#c4c4c4" stroke-width="0.8"/>
<text x="133.2" y="409.2" font-family="Liberation Sans, Noto Sans CJK JP, sans-serif" font-size="11.5" font-weight="300" fill="#111" textLength="52.6" lengthAdjust="spacingAndGlyphs" >ボディ前 (7)</text>
<rect x="76.0" y="419.0" width="150.4" height="20" fill="#f0f0f0" fill-opacity="0.93"/>
<path d="M58.8 423.4L66.6 429.0L58.8 434.6Z" fill="#ececf0" stroke="#3c3c3c" stroke-width="1.3" stroke-linejoin="round"/>
<path d="M78.9 429.0Q86.9 420.4 94.9 429.0Q86.9 437.6 78.9 429.0Z" fill="#9d9d9d"/><circle cx="86.9" cy="429.0" r="3.3" fill="#f1f1f1"/><circle cx="86.9" cy="429.0" r="1.8" fill="#9d9d9d"/>
<path d="M103.7 422.4h6.5l1 1.600h8.500v11h-16z" fill="#9a9a9a"/><path d="M103.7 425.4h16" stroke="#c4c4c4" stroke-width="0.8"/>
<text x="133.2" y="433.2" font-family="Liberation Sans, Noto Sans CJK JP, sans-serif" font-size="11.5" font-weight="300" fill="#111" textLength="82.2" lengthAdjust="spacingAndGlyphs" >フロントパネル (10)</text>
<rect x="76.0" y="443.0" width="108.0" height="20" fill="#f0f0f0" fill-opacity="0.93"/>
<path d="M58.8 447.4L66.6 453.0L58.8 458.6Z" fill="#ececf0" stroke="#3c3c3c" stroke-width="1.3" stroke-linejoin="round"/>
<path d="M78.9 453.0Q86.9 444.4 94.9 453.0Q86.9 461.6 78.9 453.0Z" fill="#9d9d9d"/><circle cx="86.9" cy="453.0" r="3.3" fill="#f1f1f1"/><circle cx="86.9" cy="453.0" r="1.8" fill="#9d9d9d"/>
<path d="M103.7 446.4h6.5l1 1.600h8.500v11h-16z" fill="#9a9a9a"/><path d="M103.7 449.4h16" stroke="#c4c4c4" stroke-width="0.8"/>
<text x="133.2" y="457.2" font-family="Liberation Sans, Noto Sans CJK JP, sans-serif" font-size="11.5" font-weight="300" fill="#111" textLength="39.8" lengthAdjust="spacingAndGlyphs" >底面 (7)</text>
<rect x="76.0" y="467.0" width="108.0" height="20" fill="#f0f0f0" fill-opacity="0.93"/>
<path d="M57.2 482.3L67.8 482.3L67.8 472.1Z" fill="url(#to)" stroke="#333" stroke-width="1" stroke-linejoin="round"/>
<path d="M78.9 477.0Q86.9 468.4 94.9 477.0Q86.9 485.6 78.9 477.0Z" fill="#9d9d9d"/><circle cx="86.9" cy="477.0" r="3.3" fill="#f1f1f1"/><circle cx="86.9" cy="477.0" r="1.8" fill="#9d9d9d"/>
<path d="M103.7 470.4h6.5l1 1.600h8.500v11h-16z" fill="#9a9a9a"/><path d="M103.7 473.4h16" stroke="#c4c4c4" stroke-width="0.8"/>
<text x="133.2" y="481.2" font-family="Liberation Sans, Noto Sans CJK JP, sans-serif" font-size="11.5" font-weight="300" fill="#111" textLength="39.8" lengthAdjust="spacingAndGlyphs" >モック (2)</text>
<rect x="94.0" y="491.0" width="109.0" height="20" fill="#f0f0f0" fill-opacity="0.93"/>
<path d="M96.9 501.0Q104.9 492.4 112.9 501.0Q104.9 509.6 96.9 501.0Z" fill="#9d9d9d"/><circle cx="104.9" cy="501.0" r="3.3" fill="#f1f1f1"/><circle cx="104.9" cy="501.0" r="1.8" fill="#9d9d9d"/>
<rect x="122.0" y="493.2" width="15" height="15.500" rx="3.500" fill="url(#cy)" stroke="#3a3a4a" stroke-width="1.100"/><ellipse cx="129.5" cy="495.8" rx="6.300" ry="1.800" fill="#fff" stroke="#c8c8d0" stroke-width="0.5"/>
<text x="151.6" y="505.2" font-family="Liberation Sans, Noto Sans CJK JP, sans-serif" font-size="11.5" font-weight="300" fill="#111" textLength="40.4" lengthAdjust="spacingAndGlyphs" >スイッチ縦</text>
<rect x="94.0" y="515.0" width="109.0" height="20" fill="#f0f0f0" fill-opacity="0.93"/>
<path d="M96.9 525.0Q104.9 516.4 112.9 525.0Q104.9 533.6 96.9 525.0Z" fill="#9d9d9d"/><circle cx="104.9" cy="525.0" r="3.3" fill="#f1f1f1"/><circle cx="104.9" cy="525.0" r="1.8" fill="#9d9d9d"/>
<rect x="122.0" y="517.2" width="15" height="15.500" rx="3.500" fill="url(#cy)" stroke="#3a3a4a" stroke-width="1.100"/><ellipse cx="129.5" cy="519.8" rx="6.300" ry="1.800" fill="#fff" stroke="#c8c8d0" stroke-width="0.5"/>
<text x="151.6" y="529.2" font-family="Liberation Sans, Noto Sans CJK JP, sans-serif" font-size="11.5" font-weight="300" fill="#111" textLength="40.4" lengthAdjust="spacingAndGlyphs" >スイッチ横</text>
<rect x="76.0" y="539.0" width="117.9" height="20" fill="#f0f0f0" fill-opacity="0.93"/>
<path d="M58.8 543.4L66.6 549.0L58.8 554.6Z" fill="#ececf0" stroke="#3c3c3c" stroke-width="1.3" stroke-linejoin="round"/>
<path d="M78.9 549.0Q86.9 540.4 94.9 549.0Q86.9 557.6 78.9 549.0Z" fill="#9d9d9d"/><circle cx="86.9" cy="549.0" r="3.3" fill="#f1f1f1"/><circle cx="86.9" cy="549.0" r="1.8" fill="#9d9d9d"/>
<path d="M103.7 542.4h6.5l1 1.600h8.500v11h-16z" fill="#9a9a9a"/><path d="M103.7 545.4h16" stroke="#c4c4c4" stroke-width="0.8"/>
<text x="133.2" y="553.2" font-family="Liberation Sans, Noto Sans CJK JP, sans-serif" font-size="11.5" font-weight="300" fill="#111" textLength="49.7" lengthAdjust="spacingAndGlyphs" >アーム (10)</text>
<rect x="58.0" y="563.0" width="99.5" height="20" fill="#f0f0f0" fill-opacity="0.93"/>
<path d="M40.8 567.4L48.6 573.0L40.8 578.6Z" fill="#ececf0" stroke="#3c3c3c" stroke-width="1.3" stroke-linejoin="round"/>
<path d="M60.9 573.0Q68.9 564.4 76.9 573.0Q68.9 581.6 60.9 573.0Z" fill="#9d9d9d"/><circle cx="68.9" cy="573.0" r="3.3" fill="#f1f1f1"/><circle cx="68.9" cy="573.0" r="1.8" fill="#9d9d9d"/>
<path d="M85.7 566.4h6.5l1 1.600h8.500v11h-16z" fill="#9a9a9a"/><path d="M85.7 569.4h16" stroke="#c4c4c4" stroke-width="0.8"/>
<text x="115.7" y="577.2" font-family="Liberation Sans, Noto Sans CJK JP, sans-serif" font-size="11.5" font-weight="300" fill="#111" textLength="30.8" lengthAdjust="spacingAndGlyphs" >スケッチ</text>
<rect x="58.0" y="587.0" width="138.8" height="20" fill="#f0f0f0" fill-opacity="0.93"/>
<path d="M40.8 591.4L48.6 597.0L40.8 602.6Z" fill="#ececf0" stroke="#3c3c3c" stroke-width="1.3" stroke-linejoin="round"/>
<path d="M60.9 597.0Q68.9 588.4 76.9 597.0Q68.9 605.6 60.9 597.0Z" fill="#9d9d9d"/><circle cx="68.9" cy="597.0" r="3.3" fill="#f1f1f1"/><circle cx="68.9" cy="597.0" r="1.8" fill="#9d9d9d"/>
<path d="M85.7 590.4h6.5l1 1.600h8.500v11h-16z" fill="#9a9a9a"/><path d="M85.7 593.4h16" stroke="#c4c4c4" stroke-width="0.8"/>
<text x="115.7" y="601.2" font-family="Liberation Sans, Noto Sans CJK JP, sans-serif" font-size="11.5" font-weight="300" fill="#111" textLength="70.1" lengthAdjust="spacingAndGlyphs" >コンストラクション</text>
<rect x="58" y="611.0" width="105.6" height="20" fill="#f0f0f0" fill-opacity="0.93"/>
<polygon points="61.3,626 70.8,626 73.3,623.5 73.3,625.5 70.8,628 61.3,628" fill="#b5b5b5"/><polygon points="61.3,616 70.8,616 70.8,626 61.3,626" fill="#63aae6"/><polygon points="61.3,616 63.8,613.5 73.3,613.5 70.8,616" fill="#8fcbfb"/><polygon points="70.8,616 73.3,613.5 73.3,623.5 70.8,626" fill="#3f8ad0"/><path d="M75.9 625.5V616.0" stroke="#222" stroke-width="1"/><path d="M74.1 616.5l1.800-3.400 1.800 3.400z" fill="#222"/>
<text x="90.6" y="625.2" font-family="Liberation Sans, Noto Sans CJK JP, sans-serif" font-size="11.5" font-weight="300" fill="#111" textLength="62.0" lengthAdjust="spacingAndGlyphs" >押し出し3387</text>
<rect x="58" y="635.0" width="105.6" height="20" fill="#f0f0f0" fill-opacity="0.93"/>
<polygon points="61.3,650 70.8,650 73.3,647.5 73.3,649.5 70.8,652 61.3,652" fill="#b5b5b5"/><polygon points="61.3,640 70.8,640 70.8,650 61.3,650" fill="#63aae6"/><polygon points="61.3,640 63.8,637.5 73.3,637.5 70.8,640" fill="#8fcbfb"/><polygon points="70.8,640 73.3,637.5 73.3,647.5 70.8,650" fill="#3f8ad0"/><path d="M75.9 649.5V640.0" stroke="#222" stroke-width="1"/><path d="M74.1 640.5l1.800-3.400 1.800 3.400z" fill="#222"/>
<text x="90.6" y="649.2" font-family="Liberation Sans, Noto Sans CJK JP, sans-serif" font-size="11.5" font-weight="300" fill="#111" textLength="62.0" lengthAdjust="spacingAndGlyphs" >押し出し3395</text>
<rect x="58" y="659.0" width="89.6" height="20" fill="#f0f0f0" fill-opacity="0.93"/>
<path d="M61.5 675.0V668.0L66.0 662.5H70.0V675.0Z" fill="#e0e0e0" stroke="#555" stroke-width="1"/><polygon points="67.5,664.0 71.5,662.0 75.5,672.0 71.5,674.0" fill="#4d9ee6"/><path d="M74.0 662.5l1.500 4" stroke="#222" stroke-width="1"/>
<text x="90.6" y="673.2" font-family="Liberation Sans, Noto Sans CJK JP, sans-serif" font-size="11.5" font-weight="300" fill="#111" textLength="46.0" lengthAdjust="spacingAndGlyphs" >勾配3399</text>
<rect x="58" y="683.0" width="105.6" height="20" fill="#f0f0f0" fill-opacity="0.93"/>
<polygon points="61.3,698 70.8,698 73.3,695.5 73.3,697.5 70.8,700 61.3,700" fill="#b5b5b5"/><polygon points="61.3,688 70.8,688 70.8,698 61.3,698" fill="#63aae6"/><polygon points="61.3,688 63.8,685.5 73.3,685.5 70.8,688" fill="#8fcbfb"/><polygon points="70.8,688 73.3,685.5 73.3,695.5 70.8,698" fill="#3f8ad0"/><path d="M75.9 697.5V688.0" stroke="#222" stroke-width="1"/><path d="M74.1 688.5l1.800-3.400 1.800 3.400z" fill="#222"/>
<text x="90.6" y="697.2" font-family="Liberation Sans, Noto Sans CJK JP, sans-serif" font-size="11.5" font-weight="300" fill="#111" textLength="62.0" lengthAdjust="spacingAndGlyphs" >押し出し3404</text>
<rect x="58" y="707.0" width="102.4" height="20" fill="#f0f0f0" fill-opacity="0.93"/>
<path d="M61.5 723.5V714.0L65.0 710.5H69.0Q76.5 711.5 76.8 718.5V721.0L74.0 723.5Z" fill="#dedede" stroke="#555" stroke-width="1"/><path d="M69.5 710.0Q76.5 711.5 77.0 718.5L73.8 720.5Q73.5 714.0 67.5 712.5Z" fill="#4d9ee6"/>
<text x="90.6" y="721.2" font-family="Liberation Sans, Noto Sans CJK JP, sans-serif" font-size="11.5" font-weight="300" fill="#111" textLength="58.8" lengthAdjust="spacingAndGlyphs" >フィレット3407</text>
<rect x="58" y="731.0" width="105.6" height="20" fill="#f0f0f0" fill-opacity="0.93"/>
<polygon points="61.3,746 70.8,746 73.3,743.5 73.3,745.5 70.8,748 61.3,748" fill="#b5b5b5"/><polygon points="61.3,736 70.8,736 70.8,746 61.3,746" fill="#63aae6"/><polygon points="61.3,736 63.8,733.5 73.3,733.5 70.8,736" fill="#8fcbfb"/><polygon points="70.8,736 73.3,733.5 73.3,743.5 70.8,746" fill="#3f8ad0"/><path d="M75.9 745.5V736.0" stroke="#222" stroke-width="1"/><path d="M74.1 736.5l1.800-3.400 1.800 3.400z" fill="#222"/>
<text x="90.6" y="745.2" font-family="Liberation Sans, Noto Sans CJK JP, sans-serif" font-size="11.5" font-weight="300" fill="#111" textLength="62.0" lengthAdjust="spacingAndGlyphs" >押し出し3409</text>
<rect x="58" y="755.0" width="105.6" height="20" fill="#f0f0f0" fill-opacity="0.93"/>
<polygon points="61.3,770 70.8,770 73.3,767.5 73.3,769.5 70.8,772 61.3,772" fill="#b5b5b5"/><polygon points="61.3,760 70.8,760 70.8,770 61.3,770" fill="#63aae6"/><polygon points="61.3,760 63.8,757.5 73.3,757.5 70.8,760" fill="#8fcbfb"/><polygon points="70.8,760 73.3,757.5 73.3,767.5 70.8,770" fill="#3f8ad0"/><path d="M75.9 769.5V760.0" stroke="#222" stroke-width="1"/><path d="M74.1 760.5l1.800-3.400 1.800 3.400z" fill="#222"/>
<text x="90.6" y="769.2" font-family="Liberation Sans, Noto Sans CJK JP, sans-serif" font-size="11.5" font-weight="300" fill="#111" textLength="62.0" lengthAdjust="spacingAndGlyphs" >押し出し3414</text>
<rect x="58" y="779.0" width="105.6" height="20" fill="#f0f0f0" fill-opacity="0.93"/>
<polygon points="61.3,794 70.8,794 73.3,791.5 73.3,793.5 70.8,796 61.3,796" fill="#b5b5b5"/><polygon points="61.3,784 70.8,784 70.8,794 61.3,794" fill="#63aae6"/><polygon points="61.3,784 63.8,781.5 73.3,781.5 70.8,784" fill="#8fcbfb"/><polygon points="70.8,784 73.3,781.5 73.3,791.5 70.8,794" fill="#3f8ad0"/><path d="M75.9 793.5V784.0" stroke="#222" stroke-width="1"/><path d="M74.1 784.5l1.800-3.400 1.800 3.400z" fill="#222"/>
<text x="90.6" y="793.2" font-family="Liberation Sans, Noto Sans CJK JP, sans-serif" font-size="11.5" font-weight="300" fill="#111" textLength="62.0" lengthAdjust="spacingAndGlyphs" >押し出し3448</text>
<rect x="58" y="803.0" width="105.6" height="20" fill="#f0f0f0" fill-opacity="0.93"/>
<polygon points="61.3,818 70.8,818 73.3,815.5 73.3,817.5 70.8,820 61.3,820" fill="#b5b5b5"/><polygon points="61.3,808 70.8,808 70.8,818 61.3,818" fill="#63aae6"/><polygon points="61.3,808 63.8,805.5 73.3,805.5 70.8,808" fill="#8fcbfb"/><polygon points="70.8,808 73.3,805.5 73.3,815.5 70.8,818" fill="#3f8ad0"/><path d="M75.9 817.5V808.0" stroke="#222" stroke-width="1"/><path d="M74.1 808.5l1.800-3.400 1.800 3.400z" fill="#222"/>
<text x="90.6" y="817.2" font-family="Liberation Sans, Noto Sans CJK JP, sans-serif" font-size="11.5" font-weight="300" fill="#111" textLength="62.0" lengthAdjust="spacingAndGlyphs" >押し出し3457</text>
<rect x="58" y="827.0" width="105.6" height="20" fill="#f0f0f0" fill-opacity="0.93"/>
<polygon points="61.3,842 70.8,842 73.3,839.5 73.3,841.5 70.8,844 61.3,844" fill="#b5b5b5"/><polygon points="61.3,832 70.8,832 70.8,842 61.3,842" fill="#63aae6"/><polygon points="61.3,832 63.8,829.5 73.3,829.5 70.8,832" fill="#8fcbfb"/><polygon points="70.8,832 73.3,829.5 73.3,839.5 70.8,842" fill="#3f8ad0"/><path d="M75.9 841.5V832.0" stroke="#222" stroke-width="1"/><path d="M74.1 832.5l1.800-3.400 1.800 3.400z" fill="#222"/>
<text x="90.6" y="841.2" font-family="Liberation Sans, Noto Sans CJK JP, sans-serif" font-size="11.5" font-weight="300" fill="#111" textLength="62.0" lengthAdjust="spacingAndGlyphs" >押し出し3458</text>
<rect x="58" y="851.0" width="105.6" height="20" fill="#f0f0f0" fill-opacity="0.93"/>
<polygon points="61.3,866 70.8,866 73.3,863.5 73.3,865.5 70.8,868 61.3,868" fill="#b5b5b5"/><polygon points="61.3,856 70.8,856 70.8,866 61.3,866" fill="#63aae6"/><polygon points="61.3,856 63.8,853.5 73.3,853.5 70.8,856" fill="#8fcbfb"/><polygon points="70.8,856 73.3,853.5 73.3,863.5 70.8,866" fill="#3f8ad0"/><path d="M75.9 865.5V856.0" stroke="#222" stroke-width="1"/><path d="M74.1 856.5l1.800-3.400 1.800 3.400z" fill="#222"/>
<text x="90.6" y="865.2" font-family="Liberation Sans, Noto Sans CJK JP, sans-serif" font-size="11.5" font-weight="300" fill="#111" textLength="62.0" lengthAdjust="spacingAndGlyphs" >押し出し3469</text>
<rect x="58" y="875.0" width="105.6" height="20" fill="#f0f0f0" fill-opacity="0.93"/>
<polygon points="61.3,890 70.8,890 73.3,887.5 73.3,889.5 70.8,892 61.3,892" fill="#b5b5b5"/><polygon points="61.3,880 70.8,880 70.8,890 61.3,890" fill="#63aae6"/><polygon points="61.3,880 63.8,877.5 73.3,877.5 70.8,880" fill="#8fcbfb"/><polygon points="70.8,880 73.3,877.5 73.3,887.5 70.8,890" fill="#3f8ad0"/><path d="M75.9 889.5V880.0" stroke="#222" stroke-width="1"/><path d="M74.1 880.5l1.800-3.400 1.800 3.400z" fill="#222"/>
<text x="90.6" y="889.2" font-family="Liberation Sans, Noto Sans CJK JP, sans-serif" font-size="11.5" font-weight="300" fill="#111" textLength="62.0" lengthAdjust="spacingAndGlyphs" >押し出し3471</text>
<rect x="58" y="899.0" width="105.6" height="20" fill="#f0f0f0" fill-opacity="0.93"/>
<polygon points="61.3,914 70.8,914 73.3,911.5 73.3,913.5 70.8,916 61.3,916" fill="#b5b5b5"/><polygon points="61.3,904 70.8,904 70.8,914 61.3,914" fill="#63aae6"/><polygon points="61.3,904 63.8,901.5 73.3,901.5 70.8,904" fill="#8fcbfb"/><polygon points="70.8,904 73.3,901.5 73.3,911.5 70.8,914" fill="#3f8ad0"/><path d="M75.9 913.5V904.0" stroke="#222" stroke-width="1"/><path d="M74.1 904.5l1.800-3.400 1.800 3.400z" fill="#222"/>
<text x="90.6" y="913.2" font-family="Liberation Sans, Noto Sans CJK JP, sans-serif" font-size="11.5" font-weight="300" fill="#111" textLength="62.0" lengthAdjust="spacingAndGlyphs" >押し出し3472</text>
<rect x="58" y="923.0" width="105.6" height="20" fill="#f0f0f0" fill-opacity="0.93"/>
<polygon points="61.3,938 70.8,938 73.3,935.5 73.3,937.5 70.8,940 61.3,940" fill="#b5b5b5"/><polygon points="61.3,928 70.8,928 70.8,938 61.3,938" fill="#63aae6"/><polygon points="61.3,928 63.8,925.5 73.3,925.5 70.8,928" fill="#8fcbfb"/><polygon points="70.8,928 73.3,925.5 73.3,935.5 70.8,938" fill="#3f8ad0"/><path d="M75.9 937.5V928.0" stroke="#222" stroke-width="1"/><path d="M74.1 928.5l1.800-3.400 1.800 3.400z" fill="#222"/>
<text x="90.6" y="937.2" font-family="Liberation Sans, Noto Sans CJK JP, sans-serif" font-size="11.5" font-weight="300" fill="#111" textLength="62.0" lengthAdjust="spacingAndGlyphs" >押し出し3473</text>
<rect x="58" y="947.0" width="105.6" height="20" fill="#f0f0f0" fill-opacity="0.93"/>
<polygon points="61.3,962 70.8,962 73.3,959.5 73.3,961.5 70.8,964 61.3,964" fill="#b5b5b5"/><polygon points="61.3,952 70.8,952 70.8,962 61.3,962" fill="#63aae6"/><polygon points="61.3,952 63.8,949.5 73.3,949.5 70.8,952" fill="#8fcbfb"/><polygon points="70.8,952 73.3,949.5 73.3,959.5 70.8,962" fill="#3f8ad0"/><path d="M75.9 961.5V952.0" stroke="#222" stroke-width="1"/><path d="M74.1 952.5l1.800-3.400 1.800 3.400z" fill="#222"/>
<text x="90.6" y="961.2" font-family="Liberation Sans, Noto Sans CJK JP, sans-serif" font-size="11.5" font-weight="300" fill="#111" textLength="62.0" lengthAdjust="spacingAndGlyphs" >押し出し3474</text>
<rect x="58" y="971.0" width="105.6" height="20" fill="#f0f0f0" fill-opacity="0.93"/>
<polygon points="61.3,986 70.8,986 73.3,983.5 73.3,985.5 70.8,988 61.3,988" fill="#b5b5b5"/><polygon points="61.3,976 70.8,976 70.8,986 61.3,986" fill="#63aae6"/><polygon points="61.3,976 63.8,973.5 73.3,973.5 70.8,976" fill="#8fcbfb"/><polygon points="70.8,976 73.3,973.5 73.3,983.5 70.8,986" fill="#3f8ad0"/><path d="M75.9 985.5V976.0" stroke="#222" stroke-width="1"/><path d="M74.1 976.5l1.800-3.400 1.800 3.400z" fill="#222"/>
<text x="90.6" y="985.2" font-family="Liberation Sans, Noto Sans CJK JP, sans-serif" font-size="11.5" font-weight="300" fill="#111" textLength="62.0" lengthAdjust="spacingAndGlyphs" >押し出し3520</text>
<rect x="4.500" y="1019.500" width="299" height="23.500" fill="#f2f2f2" stroke="#c9c9c9" stroke-width="1"/>
<text x="28.5" y="1034.6" font-family="Liberation Sans, Noto Sans CJK JP, sans-serif" font-size="11" font-weight="normal" fill="#333" textLength="31.5" lengthAdjust="spacingAndGlyphs" >コメント</text>
<circle cx="287.300" cy="1031.300" r="4.600" fill="#222"/><path d="M284.600 1031.300h5.400M287.300 1028.600v5.400" stroke="#fff" stroke-width="1.400"/>
<rect x="299.300" y="1025.500" width="1" height="12" fill="#666"/><rect x="301.500" y="1027" width="0.800" height="9" fill="#aaa"/>
</svg>
<svg width="260" height="36" viewBox="830 1012 260 36" style="position:absolute;left:830px;top:1012px">
<rect x="841" y="1020" width="237" height="23.700" fill="#f3f3f3"/>
<path d="M852.500 1024v15" stroke="#333" stroke-width="1.300"/><path d="M850 1026.500l2.500-3.500 2.500 3.500z" fill="#fff" stroke="#333" stroke-width="0.900"/><ellipse cx="852.500" cy="1033" rx="6.500" ry="2.600" fill="none" stroke="#333" stroke-width="1.300"/><path d="M845 1035l3.800-2.200 0.300 3.900z" fill="#333"/>
<polygon points="865.3,1029.8 870.7,1029.8 868.0,1033.2" fill="#333"/>
<path d="M877.500 1030h15.500v9h-15.500z" fill="#f8f8f8" stroke="#444" stroke-width="1.100"/><rect x="880.500" y="1033" width="9.500" height="3.500" fill="#b8bfd0" stroke="#555" stroke-width="0.700"/><path d="M881 1030l3-4.500 2 1.500 3-2v5" fill="none" stroke="#555" stroke-width="0.900"/>
<path d="M908 1039.5 L904.2 1033.7 Q903.6 1032 905.2 1032 Q906.2 1032.2 907.2 1033.8 V1027.8 Q907.2 1026.4 908.5 1026.4 Q909.8 1026.4 909.8 1027.8 V1030.8 V1026 Q909.8 1024.7 911.2 1024.7 Q912.6 1024.7 912.6 1026 V1030.8 V1026.5 Q912.6 1025.2 914 1025.2 Q915.4 1025.2 915.4 1026.500 V1031.200 V1028.400 Q915.4 1027.200 916.800 1027.200 Q918.300 1027.200 918.300 1028.400 V1034.500 Q918.300 1037.500 917 1039.500 Z" fill="#fff" stroke="#333" stroke-width="0.9" stroke-linejoin="round"/>
<circle cx="933.500" cy="1030.500" r="4.300" fill="#dfeef2" stroke="#444" stroke-width="1.200"/><path d="M936.700 1034l4 4.300" stroke="#333" stroke-width="2.200"/><path d="M940.500 1026.500h4M942.500 1024.500v4M940.500 1030.500h4" stroke="#333" stroke-width="0.900"/>
<rect x="955.500" y="1024.500" width="15" height="14.500" fill="none" stroke="#444" stroke-width="0.900" stroke-dasharray="2 1.500"/><circle cx="962" cy="1030" r="5.200" fill="#e3f0f2" stroke="#444" stroke-width="1.200"/><path d="M966 1034.500l4.300 4.300" stroke="#333" stroke-width="2.400"/>
<polygon points="976.3,1029.8 981.7,1029.8 979.0,1033.2" fill="#333"/>
<rect x="988.500" y="1024.500" width="15" height="11.500" rx="1" fill="#fff" stroke="#555" stroke-width="1.100"/><rect x="990.500" y="1026.500" width="11" height="7.500" fill="#9db8e6"/><path d="M993.500 1036v2h5v-2M992 1038.500h8" stroke="#555" stroke-width="1" fill="#ddd"/>
<polygon points="1006.3,1029.8 1011.7,1029.8 1009.0,1033.2" fill="#333"/>
<defs><linearGradient id="gg" x1="0" y1="0" x2="0" y2="1"><stop offset="0" stop-color="#5a5a5c"/><stop offset="1" stop-color="#9aa2ba"/></linearGradient></defs>
<rect x="1019.500" y="1024.500" width="15" height="15" fill="url(#gg)" stroke="#555" stroke-width="0.800"/>
<path d="M1022.5 1024.500v15M1019.500 1027.5h15" stroke="#dcdde4" stroke-width="0.700"/>
<path d="M1025.5 1024.500v15M1019.500 1030.5h15" stroke="#dcdde4" stroke-width="0.700"/>
<path d="M1028.5 1024.500v15M1019.500 1033.5h15" stroke="#dcdde4" stroke-width="0.700"/>
<path d="M1031.5 1024.500v15M1019.500 1036.5h15" stroke="#dcdde4" stroke-width="0.700"/>
<polygon points="1037.3,1029.8 1042.7,1029.8 1040.0,1033.2" fill="#333"/>
<rect x="1050.3" y="1025.3" width="6.400" height="6.200" fill="#a9c0ea" stroke="#3a5aa0" stroke-width="1.100"/>
<rect x="1057.8" y="1025.3" width="6.400" height="6.200" fill="#a9c0ea" stroke="#3a5aa0" stroke-width="1.100"/>
<rect x="1050.3" y="1032.6" width="6.400" height="6.200" fill="#a9c0ea" stroke="#3a5aa0" stroke-width="1.100"/>
<rect x="1057.8" y="1032.6" width="6.400" height="6.200" fill="#a9c0ea" stroke="#3a5aa0" stroke-width="1.100"/>
<polygon points="1068.3,1029.8 1073.7,1029.8 1071.0,1033.2" fill="#333"/>
</svg>
<div style="position:absolute;left:0;top:1048px;width:1920px;height:8px;background:#111"></div><div style="position:absolute;left:48px;top:1048.500px;width:344px;height:8px;background:#f0f0f0"></div><div style="position:absolute;left:333px;top:1052.500px;width:8px;height:4px;background:#f2b01e"></div><div style="position:absolute;left:353px;top:1053px;width:1.500px;height:3px;background:#999"></div><div style="position:absolute;left:362px;top:1053px;width:1.500px;height:3px;background:#999"></div><div style="position:absolute;left:785px;top:1048px;width:48px;height:8px;background:#2e2e2e"></div><div style="position:absolute;left:981px;top:1048px;width:48px;height:8px;background:#9b531a"></div><div style="position:absolute;left:1914.500px;top:1048px;width:1px;height:8px;background:#777"></div><div style="position:absolute;left:1920px;top:146px;width:8px;height:910px;background:#f8f8f8"></div>
</body></html>
